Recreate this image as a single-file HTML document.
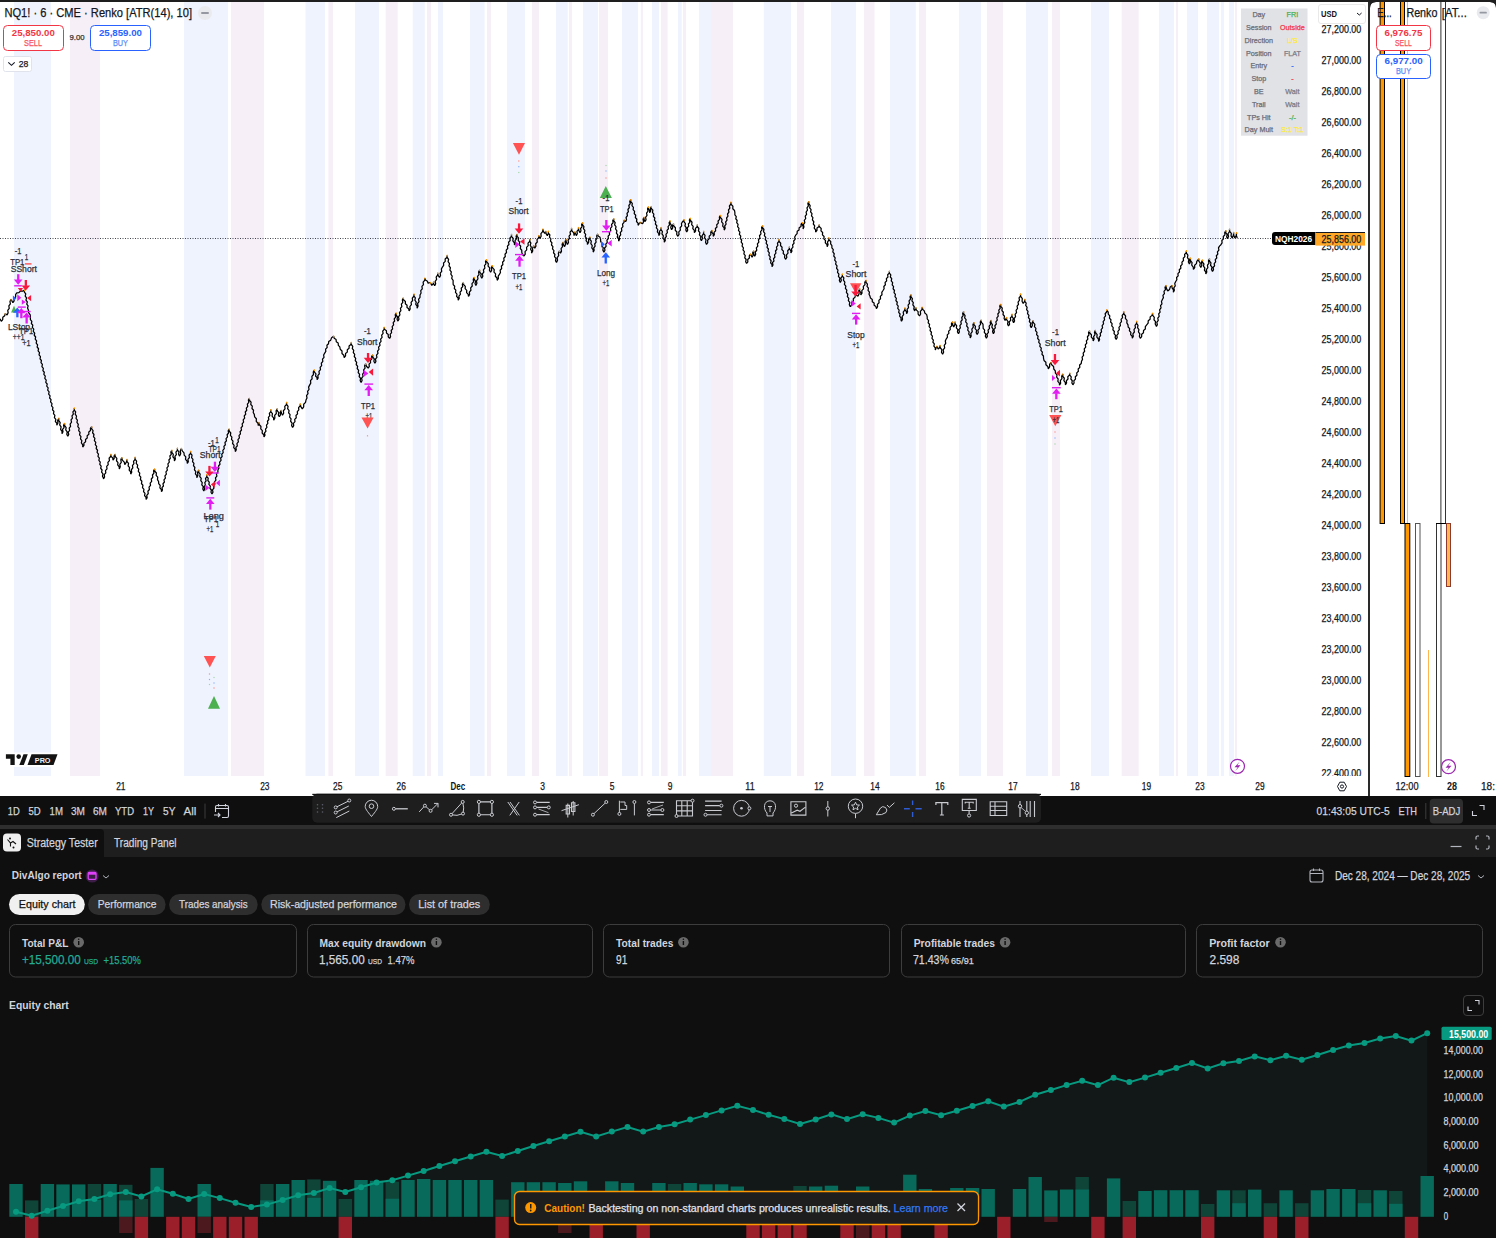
<!DOCTYPE html>
<html><head><meta charset="utf-8"><style>
html,body{margin:0;padding:0}
body{width:1496px;height:1238px;overflow:hidden;background:#0f0f0f;position:relative}
svg{position:absolute;left:0;top:0;display:block}
text{font-family:"Liberation Sans",sans-serif}
</style></head><body>

<svg width="1496" height="1238" viewBox="0 0 1496 1238">
<rect x="0" y="0" width="1496" height="796" fill="#1e1e1e"/>
<rect x="0" y="2" width="1368" height="794" fill="#ffffff"/>
<path d="M1370 796 V8 Q1370 2 1376 2 H1490 Q1496 2 1496 8 V796 Z" fill="#ffffff"/>
<rect x="14" y="2" width="37.0" height="774" fill="#eff3fe"/>
<rect x="70" y="2" width="30.0" height="774" fill="#f6eff8"/>
<rect x="184" y="2" width="44.0" height="774" fill="#eff3fe"/>
<rect x="231" y="2" width="33.0" height="774" fill="#f6eff8"/>
<rect x="305.5" y="2" width="19.5" height="774" fill="#eff3fe"/>
<rect x="328.4" y="2" width="4.6" height="774" fill="#f6eff8"/>
<rect x="355" y="2" width="24.0" height="774" fill="#eff3fe"/>
<rect x="385.7" y="2" width="12.0" height="774" fill="#f6eff8"/>
<rect x="412.7" y="2" width="12.1" height="774" fill="#eff3fe"/>
<rect x="427" y="2" width="4.0" height="774" fill="#f6eff8"/>
<rect x="438" y="2" width="5.0" height="774" fill="#eff3fe"/>
<rect x="470" y="2" width="14.6" height="774" fill="#eff3fe"/>
<rect x="487" y="2" width="4.0" height="774" fill="#f6eff8"/>
<rect x="507" y="2" width="18.0" height="774" fill="#eff3fe"/>
<rect x="532" y="2" width="7.0" height="774" fill="#f6eff8"/>
<rect x="556" y="2" width="11.7" height="774" fill="#eff3fe"/>
<rect x="569" y="2" width="3.0" height="774" fill="#f6eff8"/>
<rect x="583" y="2" width="15.0" height="774" fill="#eff3fe"/>
<rect x="599" y="2" width="9.0" height="774" fill="#f6eff8"/>
<rect x="622" y="2" width="16.0" height="774" fill="#eff3fe"/>
<rect x="640.8" y="2" width="2.2" height="774" fill="#f6eff8"/>
<rect x="652" y="2" width="7.0" height="774" fill="#eff3fe"/>
<rect x="661" y="2" width="6.6" height="774" fill="#f6eff8"/>
<rect x="678" y="2" width="3.7" height="774" fill="#eff3fe"/>
<rect x="683" y="2" width="3.0" height="774" fill="#f6eff8"/>
<rect x="699" y="2" width="12.0" height="774" fill="#eff3fe"/>
<rect x="711" y="2" width="22.0" height="774" fill="#f6eff8"/>
<rect x="763.8" y="2" width="27.2" height="774" fill="#eff3fe"/>
<rect x="797" y="2" width="7.0" height="774" fill="#f6eff8"/>
<rect x="831" y="2" width="25.0" height="774" fill="#eff3fe"/>
<rect x="864" y="2" width="10.5" height="774" fill="#f6eff8"/>
<rect x="890" y="2" width="25.8" height="774" fill="#eff3fe"/>
<rect x="919" y="2" width="7.0" height="774" fill="#f6eff8"/>
<rect x="959" y="2" width="22.0" height="774" fill="#eff3fe"/>
<rect x="987" y="2" width="16.0" height="774" fill="#f6eff8"/>
<rect x="1026" y="2" width="22.0" height="774" fill="#eff3fe"/>
<rect x="1052" y="2" width="8.0" height="774" fill="#f6eff8"/>
<rect x="1091" y="2" width="18.0" height="774" fill="#eff3fe"/>
<rect x="1121.7" y="2" width="17.0" height="774" fill="#f6eff8"/>
<rect x="1159" y="2" width="15.0" height="774" fill="#eff3fe"/>
<rect x="1176" y="2" width="2.0" height="774" fill="#f6eff8"/>
<rect x="1187" y="2" width="11.0" height="774" fill="#eff3fe"/>
<rect x="1197" y="2" width="1.0" height="774" fill="#f6eff8"/>
<rect x="1207" y="2" width="12.0" height="774" fill="#eff3fe"/>
<rect x="1221" y="2" width="3.0" height="774" fill="#eff3fe"/>
<rect x="1229" y="2" width="5.0" height="774" fill="#eff3fe"/>
<rect x="1235" y="2" width="2.0" height="774" fill="#f6eff8"/>
<polyline points="0.00,318.80 1.30,321.30 2.72,319.60 2.80,317.22 4.67,315.75 5.20,313.60 7.10,314.90 8.14,312.81 7.73,310.35 9.26,308.38 8.84,305.92 10.37,303.95 9.96,301.49 11.00,299.40 12.90,302.60 14.14,300.85 14.00,298.53 15.70,296.97 15.56,294.65 16.80,292.90 18.90,292.64 20.47,290.98 22.75,291.19 24.50,290.00 24.40,292.10 25.77,293.90 25.18,296.10 26.55,297.90 25.96,300.10 27.33,301.90 26.74,304.10 28.11,305.90 27.52,308.10 28.40,310.00 28.58,312.63 30.22,314.87 30.40,317.50 30.39,319.58 31.85,321.30 31.35,323.50 32.81,325.22 32.31,327.42 33.77,329.14 33.27,331.34 34.73,333.06 34.23,335.26 35.69,336.98 35.19,339.18 36.65,340.90 36.15,343.10 37.61,344.82 37.11,347.02 38.57,348.74 38.07,350.94 39.53,352.66 39.03,354.86 40.49,356.58 39.99,358.78 41.45,360.50 40.95,362.70 42.41,364.42 41.91,366.62 43.37,368.34 42.87,370.54 44.33,372.26 43.83,374.46 45.29,376.18 44.79,378.38 46.25,380.10 45.75,382.30 47.21,384.02 46.71,386.22 48.17,387.94 47.67,390.14 49.13,391.86 48.63,394.06 50.09,395.78 49.59,397.98 51.05,399.70 50.55,401.90 52.01,403.62 51.51,405.82 52.97,407.54 52.47,409.74 53.93,411.46 53.43,413.66 54.89,415.38 54.39,417.58 55.85,419.30 55.35,421.50 56.81,423.22 56.80,425.30 57.95,423.07 57.65,420.43 58.80,418.20 58.77,420.52 60.20,422.53 59.68,424.94 61.12,426.96 60.60,429.37 62.03,431.38 62.00,433.70 63.00,431.76 62.56,429.46 64.04,427.64 63.60,425.34 64.60,423.40 64.65,425.67 66.15,427.58 65.71,429.97 67.22,431.88 66.78,434.27 67.80,436.30 68.75,434.38 68.24,432.13 69.68,430.33 69.17,428.07 70.61,426.27 70.10,424.02 71.54,422.21 71.03,419.96 72.47,418.15 71.96,415.90 73.39,414.10 72.88,411.85 74.32,410.04 74.30,407.90 74.25,410.06 75.67,411.91 75.14,414.18 76.56,416.03 76.02,418.29 77.44,420.14 76.91,422.41 78.33,424.26 77.79,426.53 79.21,428.37 78.67,430.64 80.09,432.49 79.56,434.76 80.98,436.61 80.44,438.87 81.86,440.72 81.33,442.99 82.75,444.84 82.70,447.00 83.98,445.36 83.88,443.11 85.61,441.67 85.52,439.42 87.25,437.98 87.15,435.72 88.88,434.28 88.79,432.03 90.52,430.59 90.42,428.34 91.70,426.70 91.66,428.78 93.09,430.53 92.56,432.73 93.99,434.48 93.46,436.68 94.89,438.43 94.36,440.62 95.79,442.37 95.26,444.57 96.69,446.32 96.16,448.52 97.59,450.27 97.06,452.46 98.49,454.21 97.96,456.41 99.39,458.16 98.86,460.35 100.29,462.10 99.76,464.30 101.19,466.05 100.66,468.25 102.09,470.00 101.56,472.19 102.99,473.94 102.46,476.14 103.40,478.00 103.50,478.90 104.59,476.99 104.24,474.66 105.80,472.89 105.45,470.56 107.02,468.79 106.67,466.46 108.24,464.69 107.89,462.36 109.45,460.59 109.10,458.26 110.67,456.49 110.80,454.30 111.07,456.41 112.73,457.99 113.00,460.10 114.20,458.34 114.00,456.06 115.20,454.30 115.30,456.53 116.85,458.37 116.48,460.73 118.02,462.57 117.65,464.93 119.20,466.77 119.30,469.00 120.29,466.83 119.81,464.33 121.29,462.27 120.81,459.77 121.80,457.60 122.34,460.13 124.26,462.07 124.80,464.60 126.36,462.19 127.00,459.40 127.04,461.62 128.54,463.48 128.10,465.82 129.60,467.68 129.16,470.02 130.66,471.88 130.70,474.10 131.73,472.11 131.32,469.75 132.83,467.89 132.42,465.52 133.93,463.66 133.52,461.30 135.03,459.44 135.10,457.20 135.14,459.34 136.63,461.10 136.19,463.37 137.68,465.13 137.24,467.40 138.73,469.16 138.28,471.43 139.77,473.19 139.33,475.45 140.82,477.22 140.38,479.48 141.87,481.25 141.43,483.51 142.92,485.27 142.47,487.54 143.96,489.30 143.52,491.57 145.01,493.33 144.57,495.60 146.06,497.36 146.10,499.50 147.15,497.60 146.75,495.30 148.28,493.53 147.89,491.23 149.41,489.47 149.02,487.17 150.55,485.40 150.15,483.10 151.68,481.33 151.29,479.03 152.81,477.27 152.42,474.97 153.95,473.20 153.55,470.90 154.60,469.00 154.79,471.24 156.41,473.01 156.12,475.40 157.74,477.18 157.46,479.57 158.60,481.50 158.70,483.70 160.24,485.48 159.86,487.82 161.40,489.60 161.50,491.80 162.48,489.94 162.00,487.72 163.46,485.98 162.98,483.76 164.44,482.02 163.96,479.79 165.42,478.05 164.94,475.83 166.40,474.09 165.92,471.87 167.38,470.13 166.90,467.91 168.36,466.17 167.88,463.95 169.34,462.21 168.86,459.98 170.32,458.24 169.84,456.02 171.30,454.28 170.82,452.06 171.80,450.20 171.83,452.46 173.33,454.36 172.87,456.74 174.37,458.64 174.40,460.90 175.39,458.86 174.91,456.49 176.39,454.56 175.91,452.19 177.39,450.26 177.40,448.00 177.47,450.16 178.98,451.92 178.57,454.21 179.60,456.10 180.69,453.65 180.31,450.85 181.40,448.40 182.27,450.85 184.00,452.80 184.18,455.09 185.80,456.93 185.50,459.37 187.12,461.21 187.30,463.50 188.33,461.60 187.92,459.30 189.43,457.53 189.02,455.24 190.53,453.46 190.60,451.30 190.59,453.45 192.04,455.26 191.54,457.53 192.99,459.34 192.50,461.61 193.95,463.42 193.45,465.68 194.90,467.49 194.41,469.76 195.86,471.57 195.36,473.84 196.81,475.65 196.80,477.80 197.92,475.35 197.58,472.55 198.70,470.10 198.72,472.31 200.21,474.16 199.74,476.49 201.23,478.34 200.76,480.67 202.25,482.52 201.78,484.85 203.27,486.70 202.80,489.03 203.80,491.00 204.65,489.02 204.03,486.79 205.38,484.90 204.76,482.66 206.10,480.77 205.48,478.54 206.83,476.65 206.70,474.50 206.75,476.58 208.24,478.27 207.81,480.48 209.30,482.17 208.87,484.38 210.36,486.07 209.93,488.28 211.42,489.97 210.99,492.18 212.00,494.00 212.98,492.12 212.50,489.88 213.96,488.12 213.48,485.88 214.94,484.12 214.46,481.88 215.93,480.12 215.45,477.88 216.91,476.12 216.43,473.88 217.89,472.12 217.90,470.00 218.92,468.18 218.49,465.96 220.00,464.28 219.57,462.06 221.07,460.37 220.65,458.15 222.15,456.47 221.72,454.25 223.22,452.56 222.80,450.34 224.30,448.66 223.88,446.44 225.38,444.75 224.95,442.53 226.45,440.85 226.03,438.63 227.53,436.94 227.10,434.72 228.61,433.04 228.18,430.82 229.20,429.00 229.27,431.18 230.79,432.98 230.38,435.29 231.90,437.09 231.49,439.40 233.01,441.20 232.60,443.51 234.12,445.31 233.71,447.62 235.23,449.42 235.30,451.60 236.31,449.75 235.86,447.52 237.35,445.81 236.91,443.58 238.39,441.86 237.95,439.63 239.44,437.91 238.99,435.68 240.48,433.96 240.04,431.73 241.53,430.01 241.08,427.78 242.57,426.06 242.13,423.84 243.62,422.12 243.17,419.89 244.66,418.17 244.22,415.94 245.71,414.22 245.26,411.99 246.75,410.27 246.31,408.04 247.79,406.32 247.35,404.09 248.84,402.38 248.39,400.15 249.40,398.30 249.53,400.46 251.10,402.18 250.76,404.48 252.33,406.20 251.98,408.51 253.55,410.23 253.21,412.53 254.30,414.40 254.63,416.83 256.37,418.75 256.23,421.35 257.97,423.27 258.30,425.70 259.10,422.50 259.33,424.73 260.97,426.48 260.73,428.87 262.37,430.63 262.13,433.02 263.77,434.77 264.00,437.00 264.97,435.16 264.49,432.97 265.94,431.25 265.46,429.05 266.91,427.33 266.43,425.14 267.89,423.42 267.40,421.22 268.86,419.51 268.37,417.31 269.83,415.59 269.34,413.39 270.80,411.68 270.80,409.60 270.90,411.83 272.44,413.67 272.06,416.03 273.60,417.87 273.70,420.10 274.90,417.99 274.66,415.43 276.34,413.47 276.10,410.91 277.30,408.80 277.31,410.92 278.79,412.68 278.31,414.92 279.30,416.80 280.44,414.82 280.16,412.38 281.30,410.40 281.41,412.92 282.50,415.20 283.66,413.20 283.39,410.75 285.03,408.90 284.76,406.45 286.39,404.60 286.60,402.30 286.61,404.51 288.09,406.37 287.61,408.69 289.09,410.55 288.61,412.87 290.09,414.73 289.61,417.06 291.09,418.92 290.61,421.24 292.09,423.10 291.61,425.42 292.60,427.40 293.72,425.60 293.41,423.33 295.00,421.68 294.69,419.41 296.28,417.76 295.97,415.49 297.57,413.85 297.26,411.58 298.85,409.93 298.54,407.66 300.13,406.01 300.30,403.90 300.84,406.54 302.30,408.80 303.69,406.79 303.69,404.21 305.54,402.39 306.00,400.00 307.00,397.99 306.54,395.63 308.03,393.73 307.57,391.37 309.06,389.47 308.60,387.11 309.60,385.10 310.76,383.09 310.49,380.63 312.13,378.78 311.87,376.32 313.51,374.47 313.24,372.01 314.40,370.00 314.46,372.09 315.96,373.79 315.54,376.01 317.04,377.71 317.10,379.80 318.17,377.88 317.79,375.56 319.33,373.78 318.96,371.45 320.50,369.67 320.13,367.34 321.67,365.56 321.30,363.23 322.84,361.45 322.47,359.12 324.01,357.34 323.63,355.02 324.70,353.10 325.84,351.35 325.56,349.10 327.17,347.51 326.89,345.27 328.51,343.68 328.70,341.60 330.70,340.14 331.60,337.66 333.60,336.20 334.20,338.23 336.10,339.52 336.27,341.80 338.17,343.08 338.33,345.37 339.80,346.90 340.22,349.23 342.02,350.99 341.98,353.51 343.78,355.27 344.20,357.60 345.54,355.91 345.52,353.59 347.32,352.11 347.30,349.79 349.09,348.31 349.07,345.99 350.87,344.51 351.30,342.40 351.30,344.52 352.77,346.28 352.28,348.52 353.75,350.28 353.26,352.52 354.73,354.28 354.24,356.52 355.71,358.28 355.22,360.52 356.69,362.28 356.20,364.52 357.67,366.28 357.18,368.52 358.65,370.28 358.16,372.52 359.63,374.28 359.14,376.52 360.61,378.28 360.12,380.52 361.10,382.40 362.09,380.45 361.61,378.15 363.09,376.32 362.61,374.02 364.09,372.18 363.61,369.88 365.09,368.05 364.61,365.75 365.60,363.80 366.47,366.25 368.20,368.20 369.32,366.46 369.01,364.24 370.60,362.66 370.30,360.44 371.89,358.86 371.58,356.64 372.70,354.90 372.77,357.13 374.28,358.97 373.87,361.33 374.90,363.30 375.90,361.43 375.45,359.17 376.93,357.43 376.48,355.17 377.97,353.43 377.52,351.17 379.00,349.43 378.55,347.17 380.03,345.43 379.58,343.17 381.07,341.43 380.62,339.17 382.10,337.43 381.65,335.17 383.13,333.43 382.68,331.17 384.17,329.43 384.20,327.30 384.65,329.37 386.45,330.78 386.45,333.07 388.25,334.48 388.25,336.77 389.60,338.40 390.59,336.58 390.13,334.38 391.61,332.69 391.15,330.49 392.62,328.80 392.16,326.60 393.64,324.90 393.18,322.70 394.65,321.01 394.19,318.81 395.67,317.12 395.21,314.92 396.20,313.10 396.16,315.21 397.59,316.99 397.06,319.21 398.00,321.10 398.97,319.11 398.48,316.79 399.93,314.91 399.44,312.59 400.90,310.71 400.40,308.39 401.86,306.51 401.37,304.19 402.82,302.31 402.33,299.99 403.30,298.00 403.67,300.05 405.41,301.48 405.33,303.73 407.07,305.17 406.99,307.42 408.73,308.85 409.10,310.90 410.19,308.93 409.84,306.54 411.42,304.70 411.07,302.31 412.64,300.48 412.29,298.09 413.87,296.25 414.00,294.00 413.95,296.14 415.37,297.95 414.84,300.19 416.26,302.01 415.73,304.25 417.15,306.06 417.10,308.20 418.07,306.11 417.58,303.69 419.04,301.71 418.54,299.29 420.01,297.31 420.00,295.00 421.08,293.02 420.72,290.64 422.28,288.80 421.92,286.41 423.48,284.57 423.12,282.19 424.68,280.35 424.80,278.10 425.48,280.07 427.42,281.23 428.10,283.20 430.30,282.50 431.80,285.40 433.15,283.82 433.60,281.80 433.67,283.93 434.70,285.80 435.67,283.76 435.18,281.39 436.64,279.46 436.15,277.09 437.60,275.16 437.60,272.90 438.09,275.34 439.50,277.40 440.56,275.48 440.18,273.14 441.72,271.36 441.34,269.02 442.40,267.10 443.66,265.32 443.54,262.98 445.26,261.39 445.14,259.04 446.86,257.46 447.20,255.30 447.17,257.50 448.60,259.38 448.07,261.68 449.50,263.56 448.98,265.87 450.41,267.75 449.89,270.05 451.32,271.93 450.80,274.24 452.23,276.12 451.70,278.42 453.13,280.30 453.10,282.50 453.19,284.59 454.71,286.27 454.32,288.51 455.85,290.18 455.45,292.42 456.98,294.09 456.59,296.33 458.11,298.01 458.20,300.10 459.26,298.29 458.88,296.05 460.41,294.38 460.03,292.14 461.57,290.46 461.19,288.22 462.72,286.55 462.34,284.31 463.40,282.50 463.66,284.67 465.33,286.33 465.12,288.67 466.78,290.33 466.57,292.67 468.24,294.33 468.50,296.50 469.63,294.53 469.33,292.11 470.94,290.28 470.64,287.86 472.26,286.04 471.96,283.62 473.57,281.79 473.27,279.37 474.40,277.40 474.28,279.49 475.64,281.31 475.03,283.49 475.90,285.40 476.91,283.32 476.47,280.88 477.97,278.92 477.53,276.48 479.03,274.52 478.59,272.08 479.60,270.00 479.67,272.16 481.18,273.92 480.77,276.21 481.80,278.10 482.81,276.18 482.36,273.89 483.85,272.09 483.40,269.80 484.90,268.00 484.45,265.71 485.94,263.91 485.49,261.62 486.50,259.70 486.71,261.94 488.34,263.71 488.07,266.11 489.71,267.88 489.44,270.27 490.60,272.20 491.68,270.13 491.32,267.67 492.40,265.60 492.61,267.86 494.25,269.64 493.98,272.06 495.62,273.84 495.35,276.26 496.99,278.04 497.20,280.30 498.40,278.51 498.20,276.19 499.40,274.40 500.48,272.54 500.13,270.25 501.69,268.53 501.34,266.24 502.90,264.52 502.55,262.23 504.11,260.51 503.76,258.22 505.32,256.50 504.97,254.21 506.53,252.49 506.18,250.20 507.74,248.48 507.39,246.19 508.95,244.47 508.60,242.18 510.16,240.46 509.81,238.17 511.37,236.45 511.50,234.30 511.62,236.57 513.18,238.45 512.82,240.85 514.38,242.73 514.50,245.00 515.51,242.98 515.05,240.60 516.55,238.70 516.09,236.32 517.10,234.30 517.14,236.44 518.63,238.20 518.18,240.46 519.67,242.22 519.23,244.48 520.72,246.24 520.27,248.50 521.76,250.26 521.80,252.40 522.47,254.46 524.00,256.00 525.22,254.05 525.03,251.61 526.72,249.83 526.53,247.38 528.22,245.60 528.03,243.16 529.72,241.38 530.00,239.10 529.72,241.17 530.93,243.08 530.15,245.20 531.35,247.10 530.57,249.22 531.78,251.13 531.50,253.20 532.71,250.91 532.49,248.19 533.70,245.90 534.80,248.10 535.94,246.17 535.66,243.78 537.28,242.00 536.99,239.61 538.61,237.84 538.80,235.60 539.90,238.50 541.13,236.28 540.92,233.60 542.63,231.53 542.90,229.00 543.34,231.39 544.70,233.40 545.80,231.20 546.08,233.56 547.30,235.60 548.34,233.52 548.40,231.20 548.42,233.28 549.90,234.97 549.43,237.18 550.91,238.87 550.45,241.08 551.92,242.77 551.46,244.98 552.93,246.67 552.47,248.88 553.95,250.57 553.48,252.78 554.96,254.47 554.50,256.68 555.97,258.37 555.51,260.58 556.50,262.40 557.56,260.24 557.18,257.72 558.72,255.68 558.34,253.16 559.40,251.00 560.50,253.20 561.51,251.12 561.05,248.68 562.55,246.72 562.09,244.28 563.10,242.20 563.38,244.56 564.60,246.60 565.56,244.26 565.04,241.64 566.00,239.30 566.27,241.99 567.50,244.40 568.49,242.49 568.01,240.23 569.49,238.44 569.01,236.18 570.49,234.39 570.01,232.13 571.49,230.34 571.50,228.20 571.89,230.83 573.71,232.97 574.10,235.60 574.90,231.90 576.30,235.60 577.33,233.71 576.92,231.42 578.43,229.66 578.50,227.50 578.77,230.19 580.00,232.60 581.00,230.75 580.56,228.51 582.04,226.79 581.60,224.55 582.60,222.70 582.55,224.78 583.96,226.54 583.42,228.73 584.83,230.48 584.29,232.67 585.71,234.43 585.17,236.62 586.58,238.37 586.04,240.56 587.45,242.32 587.40,244.40 588.71,242.09 588.59,239.31 589.90,237.00 589.88,239.26 591.33,241.21 590.83,243.58 592.27,245.52 591.77,247.89 593.22,249.84 593.20,252.10 594.17,250.22 593.69,247.98 595.15,246.22 594.67,243.98 596.13,242.22 595.65,239.98 597.11,238.22 596.63,235.98 597.60,234.10 598.17,236.08 600.03,237.32 600.60,239.30 600.67,241.56 602.18,243.44 601.77,245.82 603.28,247.71 602.87,250.09 603.90,252.10 604.96,250.28 604.59,248.03 606.13,246.35 605.75,244.10 607.29,242.42 606.91,240.17 608.46,238.49 608.08,236.24 609.62,234.56 609.24,232.31 610.79,230.63 610.41,228.38 611.95,226.70 611.57,224.45 613.11,222.77 612.74,220.52 613.80,218.70 613.75,220.84 615.16,222.67 614.62,224.91 616.03,226.74 615.49,228.99 616.91,230.81 616.37,233.06 617.78,234.89 617.24,237.13 618.65,238.96 618.60,241.10 619.63,239.13 619.22,236.77 620.73,234.93 620.32,232.57 621.83,230.73 621.42,228.37 622.93,226.53 622.52,224.17 624.03,222.33 624.10,220.10 625.60,221.60 626.55,219.71 626.04,217.49 627.48,215.71 626.97,213.49 628.41,211.71 627.89,209.49 629.33,207.71 628.82,205.49 630.26,203.71 629.75,201.49 630.70,199.60 630.79,201.72 632.32,203.42 631.93,205.67 633.46,207.37 633.07,209.62 634.60,211.32 634.20,213.58 635.73,215.28 635.34,217.53 636.87,219.23 636.48,221.48 638.01,223.18 638.10,225.30 640.00,222.40 642.60,223.80 643.56,221.70 643.04,219.30 644.00,217.20 644.06,219.52 645.10,221.60 646.07,219.61 645.58,217.29 647.04,215.41 646.56,213.09 648.02,211.21 647.53,208.89 648.50,206.90 648.38,208.96 649.72,210.74 649.60,212.80 650.68,210.84 650.32,208.46 651.40,206.50 651.41,208.56 652.87,210.26 652.40,212.44 653.86,214.14 653.38,216.32 654.84,218.02 654.37,220.20 655.83,221.90 655.36,224.08 656.82,225.78 656.34,227.96 657.80,229.66 657.33,231.84 658.79,233.54 658.80,235.60 659.83,233.71 659.42,231.42 660.93,229.66 661.00,227.50 660.98,229.71 662.43,231.59 661.93,233.91 663.37,235.79 662.87,238.11 664.32,239.99 664.30,242.20 665.31,240.40 664.87,238.20 666.36,236.52 665.93,234.32 667.42,232.65 666.98,230.45 668.47,228.78 668.04,226.58 669.53,224.90 669.09,222.70 670.10,220.90 669.98,223.18 671.34,225.22 670.73,227.58 671.60,229.70 672.71,227.89 672.39,225.61 673.50,223.80 673.76,226.05 675.44,227.80 675.23,230.22 676.90,231.97 676.70,234.38 677.90,236.30 679.05,234.35 678.77,231.95 680.39,230.15 680.11,227.75 681.73,225.95 681.45,223.55 682.60,221.60 684.10,219.80 684.04,221.92 685.46,223.73 684.91,225.96 686.32,227.76 685.78,229.99 686.70,231.90 687.71,230.09 687.27,227.88 688.77,226.20 688.33,224.00 689.83,222.32 689.39,220.11 690.40,218.30 690.49,220.48 692.02,222.25 691.63,224.56 693.17,226.34 692.78,228.65 694.31,230.42 694.40,232.60 695.62,230.78 695.43,228.42 697.12,226.78 697.40,224.60 697.41,226.73 698.89,228.50 698.41,230.76 699.89,232.53 699.41,234.78 700.89,236.55 700.41,238.81 701.40,240.70 702.44,238.44 702.01,235.84 703.54,233.69 703.60,231.20 703.59,233.51 705.06,235.49 704.56,237.91 706.02,239.89 705.53,242.31 706.50,244.40 707.75,242.58 707.61,240.22 709.32,238.58 709.18,236.22 710.89,234.58 710.75,232.22 712.00,230.40 711.91,232.47 713.29,234.23 713.20,236.30 714.34,234.56 714.06,232.34 715.66,230.76 715.38,228.54 716.99,226.96 716.71,224.74 718.32,223.16 718.04,220.94 719.64,219.36 719.36,217.14 720.50,215.40 720.54,217.62 722.04,219.48 721.60,221.82 723.10,223.68 722.66,226.02 724.16,227.88 724.20,230.10 725.16,228.21 724.66,225.99 726.10,224.21 725.60,221.99 727.04,220.21 726.54,217.99 727.99,216.21 727.48,213.99 728.93,212.21 728.43,209.99 729.87,208.21 729.37,205.99 730.82,204.21 730.80,202.10 731.15,204.42 732.91,206.20 732.79,208.70 734.55,210.48 734.90,212.80 734.86,214.86 736.29,216.59 735.76,218.76 737.19,220.49 736.66,222.66 738.09,224.39 737.56,226.56 738.99,228.29 738.46,230.46 739.89,232.19 739.36,234.36 740.79,236.09 740.26,238.26 741.69,239.99 741.16,242.16 742.59,243.89 742.06,246.06 743.49,247.79 742.96,249.96 744.39,251.69 743.86,253.86 745.29,255.59 744.76,257.76 746.19,259.49 745.66,261.66 746.60,263.50 747.84,261.81 747.70,259.55 749.40,258.05 749.26,255.79 750.50,254.10 752.10,257.20 753.12,255.22 752.68,252.88 753.70,250.90 753.71,253.64 754.70,256.20 755.71,254.29 755.27,252.01 756.76,250.23 756.32,247.94 757.82,246.16 757.38,243.87 758.87,242.09 758.43,239.81 759.92,238.03 759.48,235.74 760.98,233.96 760.54,231.67 762.03,229.89 761.59,227.61 762.60,225.70 762.56,227.76 763.98,229.49 763.46,231.67 764.88,233.40 764.35,235.57 765.77,237.30 765.25,239.48 766.67,241.21 766.14,243.38 767.56,245.11 767.04,247.29 768.46,249.02 767.93,251.19 769.35,252.92 768.83,255.10 770.25,256.83 769.72,259.00 771.14,260.73 770.62,262.91 772.04,264.64 772.00,266.70 772.98,264.87 772.50,262.68 773.96,260.97 773.49,258.78 774.95,257.07 774.47,254.88 775.93,253.17 775.46,250.98 776.92,249.27 776.44,247.08 777.91,245.37 777.43,243.18 778.89,241.47 778.90,239.40 779.11,241.55 780.73,243.22 780.47,245.53 782.09,247.20 781.83,249.51 783.45,251.18 783.19,253.49 784.81,255.16 784.55,257.47 785.70,259.30 786.80,257.34 786.45,254.96 788.03,253.14 787.69,250.76 789.26,248.94 789.40,246.70 789.41,248.92 790.89,250.78 790.90,253.00 791.92,251.15 791.48,248.91 792.98,247.20 792.55,244.96 794.05,243.24 793.62,241.00 795.12,239.29 794.68,237.05 795.70,235.20 797.11,233.64 797.20,231.36 799.05,230.04 799.15,227.76 801.00,226.44 801.09,224.16 802.50,222.60 802.17,224.74 803.33,226.76 803.00,228.90 803.94,226.90 803.40,224.60 804.83,222.70 804.30,220.40 805.72,218.50 805.19,216.20 806.61,214.30 806.08,212.00 807.50,210.10 806.97,207.80 808.40,205.90 807.86,203.60 808.80,201.60 808.77,203.74 810.19,205.54 809.67,207.79 811.10,209.60 810.58,211.84 812.01,213.65 811.49,215.90 812.91,217.70 812.39,219.95 813.82,221.76 813.30,224.00 814.73,225.81 814.21,228.06 815.63,229.86 815.60,232.00 816.97,230.40 817.00,228.12 818.82,226.75 819.30,224.70 819.55,226.87 821.21,228.53 820.98,230.87 822.64,232.53 822.42,234.87 824.08,236.53 823.86,238.87 825.52,240.53 825.29,242.87 826.95,244.53 827.20,246.70 828.07,244.56 827.46,242.17 828.82,240.11 828.70,237.80 829.04,239.96 830.76,241.56 830.64,243.91 831.90,245.70 831.88,247.85 833.32,249.67 832.81,251.93 834.25,253.74 833.75,256.01 835.19,257.82 834.68,260.08 836.12,261.90 835.61,264.16 837.05,265.98 836.55,268.24 837.99,270.06 837.48,272.32 838.92,274.13 838.41,276.39 839.85,278.21 839.35,280.47 840.30,282.40 841.31,280.42 840.86,278.08 842.36,276.22 842.40,274.00 842.41,276.16 843.87,277.96 843.40,280.23 844.86,282.03 844.38,284.31 845.85,286.11 845.37,288.38 846.84,290.18 846.36,292.46 847.82,294.26 847.35,296.53 848.81,298.33 848.33,300.61 849.80,302.41 849.32,304.68 850.30,306.60 851.62,304.87 851.58,302.53 853.36,301.00 853.31,298.66 855.09,297.14 855.50,295.00 858.10,296.10 859.12,293.74 858.68,291.06 859.70,288.70 859.57,290.89 860.93,292.81 860.80,295.00 862.01,293.07 861.81,290.63 863.50,288.87 863.30,286.43 864.99,284.67 864.79,282.23 866.00,280.30 866.02,282.40 867.48,284.13 867.02,286.35 868.48,288.08 868.02,290.30 869.48,292.03 869.02,294.25 870.00,296.10 870.47,298.11 872.27,299.44 872.30,301.69 874.10,303.01 874.13,305.26 875.93,306.59 876.40,308.60 877.60,306.76 877.40,304.41 879.07,302.74 878.86,300.38 880.54,298.72 880.33,296.36 882.00,294.69 881.80,292.34 883.00,290.50 884.12,288.71 883.80,286.44 885.40,284.81 885.08,282.54 886.68,280.91 886.36,278.64 887.96,277.01 887.64,274.74 889.24,273.11 889.40,271.00 889.38,273.08 890.81,274.80 890.31,277.00 891.74,278.72 891.23,280.92 892.67,282.64 892.16,284.84 893.60,286.56 893.09,288.76 894.53,290.48 894.02,292.68 895.45,294.40 894.95,296.60 896.38,298.32 895.87,300.52 897.31,302.24 896.80,304.44 898.24,306.16 897.73,308.36 899.17,310.08 898.66,312.28 900.09,314.00 899.59,316.20 901.02,317.92 901.00,320.00 901.50,321.20 902.54,319.10 902.11,316.65 903.64,314.67 903.21,312.21 904.74,310.24 904.80,307.90 904.92,310.01 906.48,311.69 906.60,313.80 907.58,311.79 907.09,309.44 908.55,307.55 908.07,305.20 909.53,303.30 909.05,300.95 910.51,299.06 910.02,296.71 911.00,294.70 910.98,296.84 912.41,298.64 911.90,300.89 913.34,302.69 912.83,304.94 914.26,306.74 913.75,308.99 914.70,310.90 915.80,307.60 916.27,309.90 918.11,311.60 918.12,314.10 919.50,316.00 920.63,313.94 920.32,311.46 921.93,309.54 922.10,307.20 922.77,309.31 924.30,310.90 924.82,313.09 926.68,314.61 927.20,316.80 927.19,318.87 928.64,320.58 928.14,322.76 929.59,324.47 929.10,326.65 930.54,328.36 930.05,330.55 931.50,332.26 931.00,334.44 932.45,336.15 931.96,338.34 933.40,340.05 932.91,342.23 934.36,343.94 933.86,346.12 935.31,347.83 935.30,349.90 936.80,346.20 938.20,349.10 939.59,347.48 940.10,345.40 940.24,347.76 941.83,349.71 941.49,352.21 942.60,354.30 943.61,352.20 943.17,349.76 944.67,347.77 944.23,345.33 945.73,343.34 945.29,340.90 946.30,338.80 947.47,337.10 947.23,334.87 948.87,333.34 948.63,331.11 950.27,329.59 950.03,327.36 951.67,325.83 951.43,323.60 952.60,321.90 952.66,324.60 953.70,327.10 954.88,324.63 955.10,321.90 955.19,324.01 956.71,325.69 956.32,327.94 957.85,329.63 957.45,331.87 958.50,333.70 959.45,331.80 958.94,329.57 960.38,327.79 959.87,325.55 961.31,323.77 960.79,321.53 962.23,319.75 961.72,317.51 963.16,315.73 962.65,313.50 963.60,311.60 963.62,313.76 965.10,315.56 964.64,317.84 966.12,319.63 965.65,321.91 967.13,323.71 966.67,325.99 968.15,327.79 967.68,330.07 969.16,331.86 968.70,334.14 970.18,335.94 970.20,338.10 971.21,336.00 970.77,333.56 972.27,331.57 971.83,329.13 973.33,327.14 972.89,324.70 973.90,322.60 973.97,324.70 975.48,326.40 975.07,328.63 976.58,330.33 976.17,332.57 977.20,334.40 978.27,332.49 977.89,330.18 979.44,328.41 979.06,326.09 980.61,324.32 980.23,322.01 981.30,320.10 981.42,322.31 982.98,324.09 983.10,326.30 983.17,328.40 984.68,330.10 984.27,332.33 985.78,334.03 985.37,336.27 986.40,338.10 987.42,336.26 986.98,334.04 988.48,332.33 988.05,330.10 989.55,328.40 989.12,326.17 990.62,324.46 990.18,322.24 991.20,320.40 991.07,322.70 992.43,324.75 991.81,327.13 993.16,329.19 992.54,331.56 993.40,333.70 994.37,331.86 993.89,329.66 995.35,327.94 994.86,325.74 996.32,324.02 995.83,321.82 997.29,320.10 996.81,317.90 998.27,316.18 997.78,313.98 999.24,312.26 998.75,310.06 1000.21,308.34 999.73,306.14 1000.70,304.30 1000.77,306.44 1002.28,308.19 1001.87,310.47 1003.38,312.22 1002.97,314.49 1004.48,316.24 1004.07,318.52 1005.10,320.40 1006.60,317.50 1006.59,319.73 1008.04,321.64 1007.54,323.98 1008.50,326.00 1009.56,324.18 1009.19,321.92 1010.73,320.24 1010.35,317.99 1011.90,316.31 1012.00,314.20 1011.91,316.44 1013.29,318.41 1012.71,320.74 1013.60,322.80 1014.58,320.85 1014.10,318.56 1015.56,316.72 1015.09,314.43 1016.55,312.59 1016.07,310.30 1017.54,308.47 1017.06,306.17 1018.52,304.34 1018.04,302.04 1019.51,300.21 1019.03,297.91 1020.49,296.08 1020.50,293.90 1020.69,296.44 1022.33,298.56 1022.04,301.24 1023.20,303.50 1024.47,301.58 1024.80,299.30 1024.77,301.43 1026.20,303.23 1025.68,305.47 1027.12,307.28 1026.60,309.52 1028.03,311.32 1027.51,313.56 1028.94,315.36 1028.43,317.60 1029.86,319.40 1029.34,321.65 1030.77,323.45 1030.26,325.69 1031.20,327.60 1032.38,325.41 1032.12,322.79 1033.30,320.60 1033.35,322.70 1034.86,324.42 1034.43,326.65 1035.93,328.36 1035.50,330.60 1037.00,332.31 1036.58,334.55 1038.08,336.26 1037.65,338.49 1039.15,340.21 1038.72,342.44 1040.22,344.15 1039.80,346.39 1041.30,348.10 1040.87,350.34 1042.37,352.05 1041.94,354.28 1043.45,356.00 1043.50,358.10 1044.00,360.44 1045.88,362.18 1045.92,364.72 1047.80,366.46 1048.30,368.80 1049.66,366.86 1049.64,364.34 1051.00,362.40 1051.63,364.75 1053.60,366.42 1053.78,369.00 1055.30,370.90 1055.42,373.10 1056.98,374.87 1056.62,377.21 1058.18,378.99 1057.82,381.33 1059.38,383.10 1059.50,385.30 1060.64,383.20 1060.34,380.68 1061.96,378.72 1061.66,376.20 1062.80,374.10 1062.83,376.36 1064.33,378.26 1063.87,380.64 1065.37,382.54 1065.40,384.80 1066.59,383.00 1066.36,380.70 1068.02,379.07 1067.80,376.76 1069.45,375.14 1069.70,373.00 1069.75,375.10 1071.25,376.80 1070.82,379.03 1072.32,380.74 1071.88,382.96 1072.90,384.80 1074.09,383.01 1073.86,380.71 1075.52,379.10 1075.30,376.79 1076.95,375.18 1076.73,372.88 1078.39,371.26 1078.16,368.96 1079.82,367.35 1079.60,365.04 1081.25,363.43 1081.50,361.30 1082.52,359.39 1082.08,357.11 1083.58,355.33 1083.15,353.04 1084.65,351.26 1084.22,348.97 1085.72,347.19 1085.28,344.91 1086.78,343.13 1086.35,340.84 1087.85,339.06 1087.42,336.77 1088.92,334.99 1088.48,332.71 1089.50,330.80 1089.77,333.01 1091.45,334.71 1091.25,337.09 1092.93,338.79 1093.20,341.00 1094.13,338.96 1093.59,336.62 1095.01,334.68 1094.47,332.34 1095.40,330.30 1095.56,332.68 1097.16,334.64 1096.84,337.16 1098.44,339.12 1098.60,341.50 1099.58,339.65 1099.12,337.43 1100.58,335.70 1100.12,333.48 1101.58,331.75 1101.12,329.53 1102.58,327.80 1102.12,325.58 1103.58,323.85 1103.12,321.63 1104.58,319.90 1104.12,317.68 1105.58,315.95 1105.12,313.73 1106.58,312.00 1106.60,309.90 1108.20,312.10 1108.29,314.19 1109.82,315.86 1109.43,318.09 1110.97,319.76 1110.58,321.99 1112.11,323.66 1111.72,325.89 1113.25,327.56 1112.86,329.79 1114.39,331.46 1114.01,333.69 1115.54,335.36 1115.15,337.59 1116.20,339.40 1117.22,337.54 1116.79,335.30 1118.29,333.57 1117.86,331.33 1119.36,329.60 1118.93,327.36 1120.43,325.63 1120.00,323.38 1121.50,321.66 1121.07,319.41 1122.58,317.69 1122.15,315.44 1123.65,313.72 1123.70,311.60 1123.94,313.97 1125.61,315.88 1125.37,318.40 1127.04,320.31 1126.81,322.84 1128.00,324.90 1128.14,326.97 1129.70,328.58 1129.37,330.80 1130.93,332.40 1130.60,334.62 1132.16,336.23 1132.30,338.30 1133.32,336.28 1132.89,333.90 1134.40,332.01 1133.97,329.63 1135.47,327.73 1135.04,325.35 1136.55,323.46 1136.60,321.20 1136.57,323.44 1138.01,325.37 1137.50,327.72 1138.94,329.64 1138.42,331.99 1139.86,333.92 1139.35,336.27 1140.30,338.30 1141.67,336.60 1141.68,334.26 1143.49,332.77 1143.51,330.43 1145.32,328.94 1145.33,326.60 1146.70,324.90 1148.13,323.18 1148.22,320.77 1150.10,319.28 1150.19,316.87 1152.06,315.38 1152.60,313.20 1152.74,315.47 1154.31,317.33 1153.97,319.74 1155.55,321.59 1155.20,324.01 1156.30,326.00 1156.40,326.60 1157.35,324.62 1156.83,322.32 1158.27,320.45 1157.76,318.15 1159.20,316.29 1158.68,313.98 1160.12,312.12 1159.60,309.81 1161.04,307.95 1160.53,305.65 1161.97,303.78 1161.45,301.48 1162.40,299.50 1163.40,297.62 1162.94,295.38 1164.43,293.62 1163.97,291.38 1165.46,289.62 1165.00,287.38 1166.00,285.50 1166.37,288.35 1167.70,290.90 1169.55,289.42 1170.25,286.98 1172.10,285.50 1172.04,287.83 1173.46,289.87 1173.40,292.20 1174.35,290.17 1173.83,287.81 1175.27,285.89 1174.75,283.53 1175.70,281.50 1176.84,279.74 1176.57,277.49 1178.18,275.89 1177.90,273.64 1179.52,272.04 1179.24,269.79 1180.85,268.19 1180.58,265.94 1182.19,264.34 1181.92,262.09 1183.53,260.49 1183.25,258.24 1184.87,256.64 1184.59,254.39 1186.20,252.79 1186.40,250.70 1186.41,253.04 1187.89,255.06 1187.41,257.51 1188.89,259.52 1188.41,261.98 1189.40,264.10 1190.23,262.18 1189.57,260.02 1190.40,258.10 1190.52,260.51 1192.08,262.53 1191.72,265.07 1193.28,267.09 1193.40,269.50 1194.71,267.67 1194.64,265.26 1196.41,263.62 1196.80,261.40 1198.80,258.80 1198.81,261.09 1200.29,263.04 1199.81,265.44 1200.80,267.50 1201.85,265.15 1201.45,262.45 1202.50,260.10 1202.48,262.21 1203.93,263.99 1203.43,266.21 1204.87,267.99 1204.37,270.21 1205.82,271.99 1205.80,274.10 1206.81,272.03 1206.37,269.61 1207.87,267.66 1207.43,265.24 1208.93,263.29 1208.49,260.87 1209.50,258.80 1209.51,261.03 1210.99,262.92 1210.51,265.26 1211.99,267.15 1211.51,269.50 1212.50,271.50 1213.52,269.68 1213.09,267.46 1214.60,265.77 1214.17,263.55 1215.67,261.86 1215.25,259.64 1216.75,257.96 1216.33,255.74 1217.83,254.05 1217.40,251.83 1218.91,250.14 1218.48,247.92 1219.50,246.10 1220.90,244.70 1222.09,242.87 1221.86,240.53 1223.51,238.87 1223.29,236.53 1224.94,234.87 1224.71,232.53 1225.90,230.70 1225.81,232.80 1227.19,234.60 1226.61,236.80 1227.50,238.70 1228.49,236.38 1228.01,233.75 1229.49,231.53 1229.50,229.00 1229.70,231.39 1231.33,233.36 1231.05,235.89 1232.20,238.00 1233.39,235.32 1233.60,232.40 1233.76,235.31 1234.90,238.00 1236.23,235.50 1236.60,232.70 1236.40,235.41 1237.20,238.00" fill="none" stroke="#000" stroke-width="1.25" stroke-linejoin="bevel"/>
<rect x="4.7" y="313.0" width="1.1" height="1.8" fill="#ff9800"/>
<rect x="10.5" y="298.8" width="1.1" height="1.8" fill="#ff9800"/>
<rect x="24.0" y="289.4" width="1.1" height="1.8" fill="#ff9800"/>
<rect x="58.3" y="417.6" width="1.1" height="1.8" fill="#ff9800"/>
<rect x="64.1" y="422.8" width="1.1" height="1.8" fill="#ff9800"/>
<rect x="73.8" y="407.3" width="1.1" height="1.8" fill="#ff9800"/>
<rect x="91.2" y="426.1" width="1.1" height="1.8" fill="#ff9800"/>
<rect x="110.3" y="453.7" width="1.1" height="1.8" fill="#ff9800"/>
<rect x="114.7" y="453.7" width="1.1" height="1.8" fill="#ff9800"/>
<rect x="121.3" y="457.0" width="1.1" height="1.8" fill="#ff9800"/>
<rect x="126.5" y="458.8" width="1.1" height="1.8" fill="#ff9800"/>
<rect x="134.6" y="456.6" width="1.1" height="1.8" fill="#ff9800"/>
<rect x="154.1" y="468.4" width="1.1" height="1.8" fill="#ff9800"/>
<rect x="171.3" y="449.6" width="1.1" height="1.8" fill="#ff9800"/>
<rect x="176.9" y="447.4" width="1.1" height="1.8" fill="#ff9800"/>
<rect x="180.9" y="447.8" width="1.1" height="1.8" fill="#ff9800"/>
<rect x="190.1" y="450.7" width="1.1" height="1.8" fill="#ff9800"/>
<rect x="198.2" y="469.5" width="1.1" height="1.8" fill="#ff9800"/>
<rect x="206.2" y="473.9" width="1.1" height="1.8" fill="#ff9800"/>
<rect x="228.7" y="428.4" width="1.1" height="1.8" fill="#ff9800"/>
<rect x="248.9" y="397.7" width="1.1" height="1.8" fill="#ff9800"/>
<rect x="258.6" y="421.9" width="1.1" height="1.8" fill="#ff9800"/>
<rect x="270.3" y="409.0" width="1.1" height="1.8" fill="#ff9800"/>
<rect x="276.8" y="408.2" width="1.1" height="1.8" fill="#ff9800"/>
<rect x="280.8" y="409.8" width="1.1" height="1.8" fill="#ff9800"/>
<rect x="286.1" y="401.7" width="1.1" height="1.8" fill="#ff9800"/>
<rect x="299.8" y="403.3" width="1.1" height="1.8" fill="#ff9800"/>
<rect x="313.9" y="369.4" width="1.1" height="1.8" fill="#ff9800"/>
<rect x="333.1" y="335.6" width="1.1" height="1.8" fill="#ff9800"/>
<rect x="350.8" y="341.8" width="1.1" height="1.8" fill="#ff9800"/>
<rect x="365.1" y="363.2" width="1.1" height="1.8" fill="#ff9800"/>
<rect x="372.2" y="354.3" width="1.1" height="1.8" fill="#ff9800"/>
<rect x="383.7" y="326.7" width="1.1" height="1.8" fill="#ff9800"/>
<rect x="395.7" y="312.5" width="1.1" height="1.8" fill="#ff9800"/>
<rect x="402.8" y="297.4" width="1.1" height="1.8" fill="#ff9800"/>
<rect x="413.5" y="293.4" width="1.1" height="1.8" fill="#ff9800"/>
<rect x="424.3" y="277.5" width="1.1" height="1.8" fill="#ff9800"/>
<rect x="429.8" y="281.9" width="1.1" height="1.8" fill="#ff9800"/>
<rect x="433.1" y="281.2" width="1.1" height="1.8" fill="#ff9800"/>
<rect x="437.1" y="272.3" width="1.1" height="1.8" fill="#ff9800"/>
<rect x="446.7" y="254.7" width="1.1" height="1.8" fill="#ff9800"/>
<rect x="462.9" y="281.9" width="1.1" height="1.8" fill="#ff9800"/>
<rect x="473.9" y="276.8" width="1.1" height="1.8" fill="#ff9800"/>
<rect x="479.1" y="269.4" width="1.1" height="1.8" fill="#ff9800"/>
<rect x="486.0" y="259.1" width="1.1" height="1.8" fill="#ff9800"/>
<rect x="491.9" y="265.0" width="1.1" height="1.8" fill="#ff9800"/>
<rect x="511.0" y="233.7" width="1.1" height="1.8" fill="#ff9800"/>
<rect x="516.6" y="233.7" width="1.1" height="1.8" fill="#ff9800"/>
<rect x="529.5" y="238.5" width="1.1" height="1.8" fill="#ff9800"/>
<rect x="533.2" y="245.3" width="1.1" height="1.8" fill="#ff9800"/>
<rect x="538.3" y="235.0" width="1.1" height="1.8" fill="#ff9800"/>
<rect x="542.4" y="228.4" width="1.1" height="1.8" fill="#ff9800"/>
<rect x="545.3" y="230.6" width="1.1" height="1.8" fill="#ff9800"/>
<rect x="547.9" y="230.6" width="1.1" height="1.8" fill="#ff9800"/>
<rect x="558.9" y="250.4" width="1.1" height="1.8" fill="#ff9800"/>
<rect x="562.6" y="241.6" width="1.1" height="1.8" fill="#ff9800"/>
<rect x="565.5" y="238.7" width="1.1" height="1.8" fill="#ff9800"/>
<rect x="571.0" y="227.6" width="1.1" height="1.8" fill="#ff9800"/>
<rect x="574.4" y="231.3" width="1.1" height="1.8" fill="#ff9800"/>
<rect x="578.0" y="226.9" width="1.1" height="1.8" fill="#ff9800"/>
<rect x="582.1" y="222.1" width="1.1" height="1.8" fill="#ff9800"/>
<rect x="589.4" y="236.4" width="1.1" height="1.8" fill="#ff9800"/>
<rect x="597.1" y="233.5" width="1.1" height="1.8" fill="#ff9800"/>
<rect x="613.3" y="218.1" width="1.1" height="1.8" fill="#ff9800"/>
<rect x="623.6" y="219.5" width="1.1" height="1.8" fill="#ff9800"/>
<rect x="630.2" y="199.0" width="1.1" height="1.8" fill="#ff9800"/>
<rect x="639.5" y="221.8" width="1.1" height="1.8" fill="#ff9800"/>
<rect x="643.5" y="216.6" width="1.1" height="1.8" fill="#ff9800"/>
<rect x="648.0" y="206.3" width="1.1" height="1.8" fill="#ff9800"/>
<rect x="650.9" y="205.9" width="1.1" height="1.8" fill="#ff9800"/>
<rect x="660.5" y="226.9" width="1.1" height="1.8" fill="#ff9800"/>
<rect x="669.6" y="220.3" width="1.1" height="1.8" fill="#ff9800"/>
<rect x="673.0" y="223.2" width="1.1" height="1.8" fill="#ff9800"/>
<rect x="683.6" y="219.2" width="1.1" height="1.8" fill="#ff9800"/>
<rect x="689.9" y="217.7" width="1.1" height="1.8" fill="#ff9800"/>
<rect x="696.9" y="224.0" width="1.1" height="1.8" fill="#ff9800"/>
<rect x="703.1" y="230.6" width="1.1" height="1.8" fill="#ff9800"/>
<rect x="711.5" y="229.8" width="1.1" height="1.8" fill="#ff9800"/>
<rect x="720.0" y="214.8" width="1.1" height="1.8" fill="#ff9800"/>
<rect x="730.3" y="201.5" width="1.1" height="1.8" fill="#ff9800"/>
<rect x="750.0" y="253.5" width="1.1" height="1.8" fill="#ff9800"/>
<rect x="753.2" y="250.3" width="1.1" height="1.8" fill="#ff9800"/>
<rect x="762.1" y="225.1" width="1.1" height="1.8" fill="#ff9800"/>
<rect x="778.4" y="238.8" width="1.1" height="1.8" fill="#ff9800"/>
<rect x="788.9" y="246.1" width="1.1" height="1.8" fill="#ff9800"/>
<rect x="802.0" y="222.0" width="1.1" height="1.8" fill="#ff9800"/>
<rect x="808.3" y="201.0" width="1.1" height="1.8" fill="#ff9800"/>
<rect x="818.8" y="224.1" width="1.1" height="1.8" fill="#ff9800"/>
<rect x="828.2" y="237.2" width="1.1" height="1.8" fill="#ff9800"/>
<rect x="841.9" y="273.4" width="1.1" height="1.8" fill="#ff9800"/>
<rect x="855.0" y="294.4" width="1.1" height="1.8" fill="#ff9800"/>
<rect x="859.2" y="288.1" width="1.1" height="1.8" fill="#ff9800"/>
<rect x="865.5" y="279.7" width="1.1" height="1.8" fill="#ff9800"/>
<rect x="888.9" y="270.4" width="1.1" height="1.8" fill="#ff9800"/>
<rect x="904.3" y="307.3" width="1.1" height="1.8" fill="#ff9800"/>
<rect x="910.5" y="294.1" width="1.1" height="1.8" fill="#ff9800"/>
<rect x="915.3" y="307.0" width="1.1" height="1.8" fill="#ff9800"/>
<rect x="921.6" y="306.6" width="1.1" height="1.8" fill="#ff9800"/>
<rect x="936.3" y="345.6" width="1.1" height="1.8" fill="#ff9800"/>
<rect x="939.6" y="344.8" width="1.1" height="1.8" fill="#ff9800"/>
<rect x="952.1" y="321.3" width="1.1" height="1.8" fill="#ff9800"/>
<rect x="954.6" y="321.3" width="1.1" height="1.8" fill="#ff9800"/>
<rect x="963.1" y="311.0" width="1.1" height="1.8" fill="#ff9800"/>
<rect x="973.4" y="322.0" width="1.1" height="1.8" fill="#ff9800"/>
<rect x="980.8" y="319.5" width="1.1" height="1.8" fill="#ff9800"/>
<rect x="990.7" y="319.8" width="1.1" height="1.8" fill="#ff9800"/>
<rect x="1000.2" y="303.7" width="1.1" height="1.8" fill="#ff9800"/>
<rect x="1006.1" y="316.9" width="1.1" height="1.8" fill="#ff9800"/>
<rect x="1011.5" y="313.6" width="1.1" height="1.8" fill="#ff9800"/>
<rect x="1020.0" y="293.3" width="1.1" height="1.8" fill="#ff9800"/>
<rect x="1024.3" y="298.7" width="1.1" height="1.8" fill="#ff9800"/>
<rect x="1032.8" y="320.0" width="1.1" height="1.8" fill="#ff9800"/>
<rect x="1050.5" y="361.8" width="1.1" height="1.8" fill="#ff9800"/>
<rect x="1062.3" y="373.5" width="1.1" height="1.8" fill="#ff9800"/>
<rect x="1069.2" y="372.4" width="1.1" height="1.8" fill="#ff9800"/>
<rect x="1089.0" y="330.2" width="1.1" height="1.8" fill="#ff9800"/>
<rect x="1094.9" y="329.7" width="1.1" height="1.8" fill="#ff9800"/>
<rect x="1106.1" y="309.3" width="1.1" height="1.8" fill="#ff9800"/>
<rect x="1123.2" y="311.0" width="1.1" height="1.8" fill="#ff9800"/>
<rect x="1136.1" y="320.6" width="1.1" height="1.8" fill="#ff9800"/>
<rect x="1152.1" y="312.6" width="1.1" height="1.8" fill="#ff9800"/>
<rect x="1165.5" y="284.9" width="1.1" height="1.8" fill="#ff9800"/>
<rect x="1171.6" y="284.9" width="1.1" height="1.8" fill="#ff9800"/>
<rect x="1185.9" y="250.1" width="1.1" height="1.8" fill="#ff9800"/>
<rect x="1189.9" y="257.5" width="1.1" height="1.8" fill="#ff9800"/>
<rect x="1198.3" y="258.2" width="1.1" height="1.8" fill="#ff9800"/>
<rect x="1202.0" y="259.5" width="1.1" height="1.8" fill="#ff9800"/>
<rect x="1209.0" y="258.2" width="1.1" height="1.8" fill="#ff9800"/>
<rect x="1225.4" y="230.1" width="1.1" height="1.8" fill="#ff9800"/>
<rect x="1229.0" y="228.4" width="1.1" height="1.8" fill="#ff9800"/>
<rect x="1233.1" y="231.8" width="1.1" height="1.8" fill="#ff9800"/>
<rect x="1236.1" y="232.1" width="1.1" height="1.8" fill="#ff9800"/>
<text x="367.3" y="334.0" font-size="9" fill="#2a2e39" stroke="#2a2e39" stroke-width="0.25" text-anchor="middle" textLength="6.8" lengthAdjust="spacingAndGlyphs">-1</text>
<text x="367.3" y="344.7" font-size="9" fill="#2a2e39" stroke="#2a2e39" stroke-width="0.25" text-anchor="middle" textLength="20.4" lengthAdjust="spacingAndGlyphs">Short</text>
<rect x="366.9" y="353.0" width="2.3" height="5.3" fill="#f7183c"/>
<path d="M363.7 357.8 H372.3 L368.0 363.0 Z" fill="#f7183c"/>
<path d="M363.9 370 L368.3 373.4 L363.9 376.7 Z" fill="#e11df2"/>
<path d="M373.1 368.5 L368.7 372.1 L373.1 375.7 Z" fill="#f7183c"/>
<rect x="364.4" y="383.4" width="8.7" height="1.4" fill="#e11df2"/>
<path d="M364.4 390.2 H373.0 L368.7 385.0 Z" fill="#e11df2"/>
<rect x="367.6" y="389.7" width="2.3" height="6.3" fill="#e11df2"/>
<text x="368.0" y="408.7" font-size="9" fill="#2a2e39" stroke="#2a2e39" stroke-width="0.25" text-anchor="middle" textLength="14.0" lengthAdjust="spacingAndGlyphs">TP1</text>
<text x="369.0" y="419.3" font-size="9" fill="#2a2e39" stroke="#2a2e39" stroke-width="0.25" text-anchor="middle" textLength="6.8" lengthAdjust="spacingAndGlyphs">+1</text>
<path d="M361.5 417.4 H373.6 L367.6 428.5 Z" fill="#ff5252"/>
<path d="M512.9 143 H525 L519.0 154.7 Z" fill="#ff5252"/>
<text x="519.0" y="203.5" font-size="9" fill="#2a2e39" stroke="#2a2e39" stroke-width="0.25" text-anchor="middle" textLength="6.8" lengthAdjust="spacingAndGlyphs">-1</text>
<text x="518.6" y="213.8" font-size="9" fill="#2a2e39" stroke="#2a2e39" stroke-width="0.25" text-anchor="middle" textLength="20.2" lengthAdjust="spacingAndGlyphs">Short</text>
<rect x="517.9" y="223.4" width="2.3" height="5.6" fill="#f7183c"/>
<path d="M514.7 228.5 H523.3 L519.0 233.7 Z" fill="#f7183c"/>
<path d="M515.3 241.3 L519.5 244.6 L515.3 247.9 Z" fill="#e11df2"/>
<path d="M524.5 238.5 L520.1 241.6 L524.5 244.7 Z" fill="#f7183c"/>
<rect x="515.0" y="253.9" width="9.0" height="1.4" fill="#e11df2"/>
<path d="M515.2 260.7 H523.8 L519.5 255.5 Z" fill="#e11df2"/>
<rect x="518.4" y="260.2" width="2.3" height="6.5" fill="#e11df2"/>
<text x="519.0" y="279.0" font-size="9" fill="#2a2e39" stroke="#2a2e39" stroke-width="0.25" text-anchor="middle" textLength="14.0" lengthAdjust="spacingAndGlyphs">TP1</text>
<text x="519.0" y="290.0" font-size="9" fill="#2a2e39" stroke="#2a2e39" stroke-width="0.25" text-anchor="middle" textLength="6.8" lengthAdjust="spacingAndGlyphs">+1</text>
<path d="M599.8 197.9 H611.9 L605.8 186 Z" fill="#4caf50"/>
<text x="606.0" y="200.7" font-size="9" fill="#2a2e39" stroke="#2a2e39" stroke-width="0.25" text-anchor="middle" textLength="6.8" lengthAdjust="spacingAndGlyphs">-1</text>
<text x="606.9" y="211.5" font-size="9" fill="#2a2e39" stroke="#2a2e39" stroke-width="0.25" text-anchor="middle" textLength="13.6" lengthAdjust="spacingAndGlyphs">TP1</text>
<rect x="605.2" y="220.0" width="2.3" height="6.0" fill="#e11df2"/>
<path d="M602.1 225.5 H610.7 L606.4 230.7 Z" fill="#e11df2"/>
<rect x="602.0" y="231.0" width="8.8" height="1.4" fill="#e11df2"/>
<path d="M601 240.9 L604.9 244.3 L601 247.7 Z" fill="#2962ff"/>
<path d="M611.7 239.8 L607.4 243.2 L611.7 246.5 Z" fill="#e11df2"/>
<path d="M601.5 257.4 H610.1 L605.8 252.2 Z" fill="#2962ff"/>
<rect x="604.6" y="256.9" width="2.3" height="6.6" fill="#2962ff"/>
<text x="606.0" y="276.0" font-size="9" fill="#2a2e39" stroke="#2a2e39" stroke-width="0.25" text-anchor="middle" textLength="18.0" lengthAdjust="spacingAndGlyphs">Long</text>
<text x="606.0" y="286.0" font-size="9" fill="#2a2e39" stroke="#2a2e39" stroke-width="0.25" text-anchor="middle" textLength="6.8" lengthAdjust="spacingAndGlyphs">+1</text>
<text x="855.8" y="266.9" font-size="9" fill="#2a2e39" stroke="#2a2e39" stroke-width="0.25" text-anchor="middle" textLength="6.8" lengthAdjust="spacingAndGlyphs">-1</text>
<text x="856.0" y="277.1" font-size="9" fill="#2a2e39" stroke="#2a2e39" stroke-width="0.25" text-anchor="middle" textLength="20.9" lengthAdjust="spacingAndGlyphs">Short</text>
<path d="M850 283.3 H861.5 L855.8 293.5 Z" fill="#ff5252"/>
<rect x="854.4" y="285.0" width="2.3" height="6.9" fill="#f7183c"/>
<path d="M851.2 291.4 H859.8 L855.5 296.6 Z" fill="#f7183c"/>
<path d="M851.3 300.2 L855.8 303.5 L851.3 306.8 Z" fill="#e11df2"/>
<path d="M860.6 303.3 L856.6 306.4 L860.6 309.5 Z" fill="#f7183c"/>
<rect x="852.0" y="312.7" width="8.2" height="1.4" fill="#e11df2"/>
<path d="M851.8 319.5 H860.4 L856.1 314.3 Z" fill="#e11df2"/>
<rect x="855.0" y="319.0" width="2.3" height="5.6" fill="#e11df2"/>
<text x="856.0" y="337.5" font-size="9" fill="#2a2e39" stroke="#2a2e39" stroke-width="0.25" text-anchor="middle" textLength="17.3" lengthAdjust="spacingAndGlyphs">Stop</text>
<text x="856.0" y="347.7" font-size="9" fill="#2a2e39" stroke="#2a2e39" stroke-width="0.25" text-anchor="middle" textLength="6.8" lengthAdjust="spacingAndGlyphs">+1</text>
<text x="1055.5" y="335.3" font-size="9" fill="#2a2e39" stroke="#2a2e39" stroke-width="0.25" text-anchor="middle" textLength="6.8" lengthAdjust="spacingAndGlyphs">-1</text>
<text x="1055.2" y="345.8" font-size="9" fill="#2a2e39" stroke="#2a2e39" stroke-width="0.25" text-anchor="middle" textLength="20.9" lengthAdjust="spacingAndGlyphs">Short</text>
<rect x="1053.8" y="354.0" width="2.3" height="6.5" fill="#f7183c"/>
<path d="M1050.7 360.0 H1059.3 L1055.0 365.2 Z" fill="#f7183c"/>
<path d="M1060 369.8 L1055.8 373.2 L1060 376.6 Z" fill="#f7183c"/>
<path d="M1052 374.9 L1055.5 378.0 L1052 381.1 Z" fill="#e11df2"/>
<rect x="1052.0" y="387.0" width="8.8" height="1.4" fill="#e11df2"/>
<path d="M1052.1 393.8 H1060.7 L1056.4 388.6 Z" fill="#e11df2"/>
<rect x="1055.2" y="393.3" width="2.3" height="5.9" fill="#e11df2"/>
<text x="1056.0" y="411.6" font-size="9" fill="#2a2e39" stroke="#2a2e39" stroke-width="0.25" text-anchor="middle" textLength="13.6" lengthAdjust="spacingAndGlyphs">TP1</text>
<path d="M1049.2 415 H1061.4 L1055.3 426.3 Z" fill="#ff5252"/>
<text x="1056.0" y="423.0" font-size="9" fill="#2a2e39" stroke="#2a2e39" stroke-width="0.25" text-anchor="middle" textLength="6.8" lengthAdjust="spacingAndGlyphs">+1</text>
<text x="211.4" y="445.9" font-size="9" fill="#2a2e39" stroke="#2a2e39" stroke-width="0.25" text-anchor="middle" textLength="6.8" lengthAdjust="spacingAndGlyphs">-1</text>
<text x="217.0" y="442.7" font-size="9" fill="#2a2e39" stroke="#2a2e39" stroke-width="0.25" text-anchor="middle" textLength="3.5" lengthAdjust="spacingAndGlyphs">1</text>
<text x="214.6" y="452.0" font-size="9" fill="#2a2e39" stroke="#2a2e39" stroke-width="0.25" text-anchor="middle" textLength="12.1" lengthAdjust="spacingAndGlyphs">TP1</text>
<text x="210.2" y="457.5" font-size="9" fill="#2a2e39" stroke="#2a2e39" stroke-width="0.25" text-anchor="middle" textLength="20.9" lengthAdjust="spacingAndGlyphs">Short</text>
<rect x="213.8" y="461.7" width="2.3" height="5.6" fill="#e11df2"/>
<path d="M210.6 466.8 H219.2 L214.9 472.0 Z" fill="#e11df2"/>
<rect x="210.9" y="472.3" width="7.9" height="1.4" fill="#e11df2"/>
<rect x="208.3" y="465.9" width="2.3" height="6.0" fill="#f7183c"/>
<path d="M205.2 471.4 H213.8 L209.5 476.6 Z" fill="#f7183c"/>
<path d="M219.9 479.8 L216 483.1 L219.9 486.3 Z" fill="#e11df2"/>
<path d="M214.9 481.2 L210.9 484.4 L214.9 487.7 Z" fill="#f7183c"/>
<path d="M205.3 484.5 L209.5 487.8 L205.3 491 Z" fill="#e11df2"/>
<rect x="206.3" y="497.2" width="8.0" height="1.4" fill="#e11df2"/>
<path d="M206.0 504.0 H214.6 L210.3 498.8 Z" fill="#e11df2"/>
<rect x="209.2" y="503.5" width="2.3" height="6.1" fill="#e11df2"/>
<text x="213.7" y="518.9" font-size="9" fill="#2a2e39" stroke="#2a2e39" stroke-width="0.25" text-anchor="middle" textLength="20.5" lengthAdjust="spacingAndGlyphs">Long</text>
<text x="211.0" y="521.7" font-size="9" fill="#2a2e39" stroke="#2a2e39" stroke-width="0.25" text-anchor="middle" textLength="13.9" lengthAdjust="spacingAndGlyphs">TP1</text>
<text x="210.0" y="531.9" font-size="9" fill="#2a2e39" stroke="#2a2e39" stroke-width="0.25" text-anchor="middle" textLength="6.8" lengthAdjust="spacingAndGlyphs">+1</text>
<text x="217.5" y="527.0" font-size="9" fill="#2a2e39" stroke="#2a2e39" stroke-width="0.25" text-anchor="middle" textLength="3.5" lengthAdjust="spacingAndGlyphs">1</text>
<text x="18.0" y="254.2" font-size="9" fill="#2a2e39" stroke="#2a2e39" stroke-width="0.25" text-anchor="middle" textLength="6.6" lengthAdjust="spacingAndGlyphs">-1</text>
<text x="26.6" y="260.4" font-size="9" fill="#2a2e39" stroke="#2a2e39" stroke-width="0.25" text-anchor="middle" textLength="3.5" lengthAdjust="spacingAndGlyphs">1</text>
<text x="17.3" y="265.3" font-size="9" fill="#2a2e39" stroke="#2a2e39" stroke-width="0.25" text-anchor="middle" textLength="14.2" lengthAdjust="spacingAndGlyphs">TP1</text>
<text x="23.8" y="272.4" font-size="9" fill="#2a2e39" stroke="#2a2e39" stroke-width="0.25" text-anchor="middle" textLength="26.2" lengthAdjust="spacingAndGlyphs">SShort</text>
<rect x="24.9" y="263.2" width="6.6" height="1.4" fill="#ff5252"/>
<rect x="17.1" y="274.2" width="2.3" height="5.9" fill="#e11df2"/>
<path d="M13.9 279.6 H22.5 L18.2 284.8 Z" fill="#e11df2"/>
<rect x="14.2" y="285.1" width="7.6" height="1.4" fill="#e11df2"/>
<rect x="24.7" y="280.0" width="2.3" height="5.9" fill="#f7183c"/>
<path d="M21.5 285.4 H30.1 L25.8 290.6 Z" fill="#f7183c"/>
<path d="M17.8 288 H23.1 L20.5 291.5 Z" fill="#f7183c"/>
<path d="M12.9 295.5 L16.4 298.4 L12.9 301.3 Z" fill="#2962ff"/>
<path d="M17.3 294.2 L21.3 297.8 L17.3 301.3 Z" fill="#e11df2"/>
<path d="M31.1 295 L27.1 298.1 L31.1 301.3 Z" fill="#f7183c"/>
<path d="M21.8 299.5 L25.8 302.1 L21.8 304.8 Z" fill="#e11df2"/>
<path d="M11.1 312.4 H16.9 L14.0 305.7 Z" fill="#4caf50"/>
<path d="M13.0 312.7 H21.6 L17.3 307.5 Z" fill="#2962ff"/>
<rect x="16.2" y="312.2" width="2.3" height="5.1" fill="#2962ff"/>
<rect x="17.8" y="306.4" width="8.0" height="1.4" fill="#e11df2"/>
<path d="M17.0 313.2 H25.6 L21.3 308.0 Z" fill="#e11df2"/>
<rect x="20.2" y="312.7" width="2.3" height="5.5" fill="#e11df2"/>
<rect x="22.6" y="310.8" width="8.0" height="1.4" fill="#e11df2"/>
<path d="M22.3 317.6 H30.9 L26.6 312.4 Z" fill="#e11df2"/>
<rect x="25.5" y="317.1" width="2.3" height="6.4" fill="#e11df2"/>
<text x="19.0" y="329.7" font-size="9" fill="#2a2e39" stroke="#2a2e39" stroke-width="0.25" text-anchor="middle" textLength="22.2" lengthAdjust="spacingAndGlyphs">LStop</text>
<text x="26.2" y="334.1" font-size="9" fill="#2a2e39" stroke="#2a2e39" stroke-width="0.25" text-anchor="middle" textLength="14.2" lengthAdjust="spacingAndGlyphs">TP1</text>
<text x="18.6" y="340.0" font-size="9" fill="#2a2e39" stroke="#2a2e39" stroke-width="0.25" text-anchor="middle" textLength="11.5" lengthAdjust="spacingAndGlyphs">++1</text>
<text x="26.4" y="345.7" font-size="9" fill="#2a2e39" stroke="#2a2e39" stroke-width="0.25" text-anchor="middle" textLength="8.4" lengthAdjust="spacingAndGlyphs">+1</text>
<rect x="208.9" y="673.4" width="1.2" height="1.2" fill="#ff8a80"/>
<rect x="208.9" y="678.9" width="1.2" height="1.2" fill="#82b1ff"/>
<rect x="208.9" y="683.9" width="1.2" height="1.2" fill="#a5d6a7"/>
<rect x="213.4" y="676.9" width="1.2" height="1.2" fill="#a5d6a7"/>
<rect x="213.4" y="682.4" width="1.2" height="1.2" fill="#82b1ff"/>
<rect x="213.4" y="687.4" width="1.2" height="1.2" fill="#ff8a80"/>
<rect x="518.1999999999999" y="160.4" width="1.2" height="1.2" fill="#ff8a80"/>
<rect x="518.1999999999999" y="166.1" width="1.2" height="1.2" fill="#82b1ff"/>
<rect x="518.1999999999999" y="171.9" width="1.2" height="1.2" fill="#a5d6a7"/>
<rect x="605.4" y="164.9" width="1.2" height="1.2" fill="#a5d6a7"/>
<rect x="605.4" y="170.4" width="1.2" height="1.2" fill="#82b1ff"/>
<rect x="605.4" y="177.4" width="1.2" height="1.2" fill="#ff8a80"/>
<rect x="366.9" y="435.2" width="1.2" height="1.2" fill="#ff8a80"/>
<rect x="1054.4" y="431.4" width="1.2" height="1.2" fill="#ff8a80"/>
<rect x="1054.4" y="437.4" width="1.2" height="1.2" fill="#82b1ff"/>
<rect x="1054.4" y="443.4" width="1.2" height="1.2" fill="#a5d6a7"/>
<path d="M203.8 656 H215.8 L209.8 667.6 Z" fill="#ff5252"/>
<path d="M208 708.7 H220 L214.0 696 Z" fill="#4caf50"/>
<line x1="0" y1="238.5" x2="1272" y2="238.5" stroke="#131722" stroke-opacity="0.8" stroke-width="1" stroke-dasharray="1,1.5"/>
<text x="1361.3" y="33.3" font-size="10" fill="#131722" stroke="#131722" stroke-width="0.25" text-anchor="end" textLength="39.7" lengthAdjust="spacingAndGlyphs">27,200.00</text>
<text x="1361.3" y="64.3" font-size="10" fill="#131722" stroke="#131722" stroke-width="0.25" text-anchor="end" textLength="39.7" lengthAdjust="spacingAndGlyphs">27,000.00</text>
<text x="1361.3" y="95.2" font-size="10" fill="#131722" stroke="#131722" stroke-width="0.25" text-anchor="end" textLength="39.7" lengthAdjust="spacingAndGlyphs">26,800.00</text>
<text x="1361.3" y="126.2" font-size="10" fill="#131722" stroke="#131722" stroke-width="0.25" text-anchor="end" textLength="39.7" lengthAdjust="spacingAndGlyphs">26,600.00</text>
<text x="1361.3" y="157.2" font-size="10" fill="#131722" stroke="#131722" stroke-width="0.25" text-anchor="end" textLength="39.7" lengthAdjust="spacingAndGlyphs">26,400.00</text>
<text x="1361.3" y="188.2" font-size="10" fill="#131722" stroke="#131722" stroke-width="0.25" text-anchor="end" textLength="39.7" lengthAdjust="spacingAndGlyphs">26,200.00</text>
<text x="1361.3" y="219.2" font-size="10" fill="#131722" stroke="#131722" stroke-width="0.25" text-anchor="end" textLength="39.7" lengthAdjust="spacingAndGlyphs">26,000.00</text>
<text x="1361.3" y="250.1" font-size="10" fill="#131722" stroke="#131722" stroke-width="0.25" text-anchor="end" textLength="39.7" lengthAdjust="spacingAndGlyphs">25,800.00</text>
<text x="1361.3" y="281.1" font-size="10" fill="#131722" stroke="#131722" stroke-width="0.25" text-anchor="end" textLength="39.7" lengthAdjust="spacingAndGlyphs">25,600.00</text>
<text x="1361.3" y="312.1" font-size="10" fill="#131722" stroke="#131722" stroke-width="0.25" text-anchor="end" textLength="39.7" lengthAdjust="spacingAndGlyphs">25,400.00</text>
<text x="1361.3" y="343.1" font-size="10" fill="#131722" stroke="#131722" stroke-width="0.25" text-anchor="end" textLength="39.7" lengthAdjust="spacingAndGlyphs">25,200.00</text>
<text x="1361.3" y="374.0" font-size="10" fill="#131722" stroke="#131722" stroke-width="0.25" text-anchor="end" textLength="39.7" lengthAdjust="spacingAndGlyphs">25,000.00</text>
<text x="1361.3" y="405.0" font-size="10" fill="#131722" stroke="#131722" stroke-width="0.25" text-anchor="end" textLength="39.7" lengthAdjust="spacingAndGlyphs">24,800.00</text>
<text x="1361.3" y="436.0" font-size="10" fill="#131722" stroke="#131722" stroke-width="0.25" text-anchor="end" textLength="39.7" lengthAdjust="spacingAndGlyphs">24,600.00</text>
<text x="1361.3" y="467.0" font-size="10" fill="#131722" stroke="#131722" stroke-width="0.25" text-anchor="end" textLength="39.7" lengthAdjust="spacingAndGlyphs">24,400.00</text>
<text x="1361.3" y="497.9" font-size="10" fill="#131722" stroke="#131722" stroke-width="0.25" text-anchor="end" textLength="39.7" lengthAdjust="spacingAndGlyphs">24,200.00</text>
<text x="1361.3" y="528.9" font-size="10" fill="#131722" stroke="#131722" stroke-width="0.25" text-anchor="end" textLength="39.7" lengthAdjust="spacingAndGlyphs">24,000.00</text>
<text x="1361.3" y="559.9" font-size="10" fill="#131722" stroke="#131722" stroke-width="0.25" text-anchor="end" textLength="39.7" lengthAdjust="spacingAndGlyphs">23,800.00</text>
<text x="1361.3" y="590.9" font-size="10" fill="#131722" stroke="#131722" stroke-width="0.25" text-anchor="end" textLength="39.7" lengthAdjust="spacingAndGlyphs">23,600.00</text>
<text x="1361.3" y="621.8" font-size="10" fill="#131722" stroke="#131722" stroke-width="0.25" text-anchor="end" textLength="39.7" lengthAdjust="spacingAndGlyphs">23,400.00</text>
<text x="1361.3" y="652.8" font-size="10" fill="#131722" stroke="#131722" stroke-width="0.25" text-anchor="end" textLength="39.7" lengthAdjust="spacingAndGlyphs">23,200.00</text>
<text x="1361.3" y="683.8" font-size="10" fill="#131722" stroke="#131722" stroke-width="0.25" text-anchor="end" textLength="39.7" lengthAdjust="spacingAndGlyphs">23,000.00</text>
<text x="1361.3" y="714.8" font-size="10" fill="#131722" stroke="#131722" stroke-width="0.25" text-anchor="end" textLength="39.7" lengthAdjust="spacingAndGlyphs">22,800.00</text>
<text x="1361.3" y="745.7" font-size="10" fill="#131722" stroke="#131722" stroke-width="0.25" text-anchor="end" textLength="39.7" lengthAdjust="spacingAndGlyphs">22,600.00</text>
<text x="1361.3" y="776.7" font-size="10" fill="#131722" stroke="#131722" stroke-width="0.25" text-anchor="end" textLength="39.7" lengthAdjust="spacingAndGlyphs">22,400.00</text>
<rect x="1316" y="776" width="52" height="20" fill="#ffffff"/>
<text x="120.8" y="789.7" font-size="10" fill="#131722" stroke="#131722" stroke-width="0.25" text-anchor="middle" textLength="9.3" lengthAdjust="spacingAndGlyphs">21</text>
<text x="264.8" y="789.7" font-size="10" fill="#131722" stroke="#131722" stroke-width="0.25" text-anchor="middle" textLength="9.3" lengthAdjust="spacingAndGlyphs">23</text>
<text x="337.7" y="789.7" font-size="10" fill="#131722" stroke="#131722" stroke-width="0.25" text-anchor="middle" textLength="9.3" lengthAdjust="spacingAndGlyphs">25</text>
<text x="401.2" y="789.7" font-size="10" fill="#131722" stroke="#131722" stroke-width="0.25" text-anchor="middle" textLength="9.3" lengthAdjust="spacingAndGlyphs">26</text>
<text x="457.9" y="789.7" font-size="10" fill="#131722" font-weight="bold" text-anchor="middle" textLength="14.7" lengthAdjust="spacingAndGlyphs">Dec</text>
<text x="542.5" y="789.7" font-size="10" fill="#131722" stroke="#131722" stroke-width="0.25" text-anchor="middle" textLength="4.7" lengthAdjust="spacingAndGlyphs">3</text>
<text x="612.0" y="789.7" font-size="10" fill="#131722" stroke="#131722" stroke-width="0.25" text-anchor="middle" textLength="4.7" lengthAdjust="spacingAndGlyphs">5</text>
<text x="670.0" y="789.7" font-size="10" fill="#131722" stroke="#131722" stroke-width="0.25" text-anchor="middle" textLength="4.7" lengthAdjust="spacingAndGlyphs">9</text>
<text x="750.0" y="789.7" font-size="10" fill="#131722" stroke="#131722" stroke-width="0.25" text-anchor="middle" textLength="9.3" lengthAdjust="spacingAndGlyphs">11</text>
<text x="818.8" y="789.7" font-size="10" fill="#131722" stroke="#131722" stroke-width="0.25" text-anchor="middle" textLength="9.3" lengthAdjust="spacingAndGlyphs">12</text>
<text x="875.0" y="789.7" font-size="10" fill="#131722" stroke="#131722" stroke-width="0.25" text-anchor="middle" textLength="9.3" lengthAdjust="spacingAndGlyphs">14</text>
<text x="940.0" y="789.7" font-size="10" fill="#131722" stroke="#131722" stroke-width="0.25" text-anchor="middle" textLength="9.3" lengthAdjust="spacingAndGlyphs">16</text>
<text x="1013.0" y="789.7" font-size="10" fill="#131722" stroke="#131722" stroke-width="0.25" text-anchor="middle" textLength="9.3" lengthAdjust="spacingAndGlyphs">17</text>
<text x="1075.0" y="789.7" font-size="10" fill="#131722" stroke="#131722" stroke-width="0.25" text-anchor="middle" textLength="9.3" lengthAdjust="spacingAndGlyphs">18</text>
<text x="1146.4" y="789.7" font-size="10" fill="#131722" stroke="#131722" stroke-width="0.25" text-anchor="middle" textLength="9.3" lengthAdjust="spacingAndGlyphs">19</text>
<text x="1200.0" y="789.7" font-size="10" fill="#131722" stroke="#131722" stroke-width="0.25" text-anchor="middle" textLength="9.3" lengthAdjust="spacingAndGlyphs">23</text>
<text x="1260.0" y="789.7" font-size="10" fill="#131722" stroke="#131722" stroke-width="0.25" text-anchor="middle" textLength="9.3" lengthAdjust="spacingAndGlyphs">29</text>
<text x="1407.0" y="789.7" font-size="10" fill="#131722" stroke="#131722" stroke-width="0.25" text-anchor="middle" textLength="23.0" lengthAdjust="spacingAndGlyphs">12:00</text>
<text x="1452.0" y="789.7" font-size="10" fill="#131722" font-weight="bold" text-anchor="middle" textLength="10.0" lengthAdjust="spacingAndGlyphs">28</text>
<text x="1481.0" y="789.7" font-size="10" fill="#131722" stroke="#131722" stroke-width="0.25" textLength="14.0" lengthAdjust="spacingAndGlyphs">18:</text>
<path d="M1337.5 786.5 L1339.8 782.2 H1344.2 L1346.5 786.5 L1344.2 790.8 H1339.8 Z" fill="none" stroke="#131722" stroke-width="1"/><circle cx="1342" cy="786.5" r="1.6" fill="none" stroke="#131722" stroke-width="1"/>
<text x="4.4" y="16.9" font-size="12.2" fill="#131722" stroke="#131722" stroke-width="0.25" textLength="187.6" lengthAdjust="spacingAndGlyphs">NQ1! · 6 · CME · Renko [ATR(14), 10]</text>
<circle cx="205" cy="13" r="7" fill="#e9eaee"/><rect x="201" y="12" width="8" height="2" rx="1" fill="#9598a1"/>
<rect x="3.5" y="25.5" width="60" height="25" rx="4" fill="#fff" stroke="#f23645" stroke-width="1"/>
<text x="33.3" y="36.0" font-size="8.7" fill="#f23645" font-weight="bold" text-anchor="middle" textLength="43.0" lengthAdjust="spacingAndGlyphs">25,850.00</text>
<text x="33.0" y="46.0" font-size="8.7" fill="#f7525f" stroke="#f7525f" stroke-width="0.25" text-anchor="middle" textLength="18.0" lengthAdjust="spacingAndGlyphs">SELL</text>
<text x="69.5" y="39.7" font-size="7.6" fill="#333333" stroke="#333333" stroke-width="0.25" textLength="15.1" lengthAdjust="spacingAndGlyphs">9.00</text>
<rect x="90.5" y="25.5" width="60" height="25" rx="4" fill="#fff" stroke="#2962ff" stroke-width="1"/>
<text x="120.4" y="36.0" font-size="8.7" fill="#2962ff" font-weight="bold" text-anchor="middle" textLength="43.0" lengthAdjust="spacingAndGlyphs">25,859.00</text>
<text x="120.4" y="46.0" font-size="8.7" fill="#5b8bf7" stroke="#5b8bf7" stroke-width="0.25" text-anchor="middle" textLength="15.0" lengthAdjust="spacingAndGlyphs">BUY</text>
<rect x="3.5" y="56.5" width="28" height="15" rx="2" fill="#fff" stroke="#e0e3eb" stroke-width="1"/>
<path d="M8.3 62.3 L11.5 65.3 L14.7 62.3" fill="none" stroke="#131722" stroke-width="1.1"/>
<text x="18.8" y="66.5" font-size="9.5" fill="#131722" stroke="#131722" stroke-width="0.25" textLength="9.6" lengthAdjust="spacingAndGlyphs">28</text>
<rect x="1241" y="8.5" width="66.5" height="127.2" fill="#e1e2e6"/>
<text x="1258.8" y="17.3" font-size="7.2" fill="#6a6d78" stroke="#6a6d78" stroke-width="0.25" text-anchor="middle">Day</text>
<text x="1292.4" y="17.3" font-size="7.2" fill="#4caf50" stroke="#4caf50" stroke-width="0.25" text-anchor="middle">FRI</text>
<text x="1258.8" y="30.1" font-size="7.2" fill="#6a6d78" stroke="#6a6d78" stroke-width="0.25" text-anchor="middle">Session</text>
<text x="1292.4" y="30.1" font-size="7.2" fill="#f23645" stroke="#f23645" stroke-width="0.25" text-anchor="middle">Outside</text>
<text x="1258.8" y="42.9" font-size="7.2" fill="#6a6d78" stroke="#6a6d78" stroke-width="0.25" text-anchor="middle">Direction</text>
<text x="1292.4" y="42.9" font-size="7.2" fill="#ffeb3b" stroke="#ffeb3b" stroke-width="0.25" text-anchor="middle">L/S</text>
<text x="1258.8" y="55.6" font-size="7.2" fill="#6a6d78" stroke="#6a6d78" stroke-width="0.25" text-anchor="middle">Position</text>
<text x="1292.4" y="55.6" font-size="7.2" fill="#787b86" stroke="#787b86" stroke-width="0.25" text-anchor="middle">FLAT</text>
<text x="1258.8" y="68.4" font-size="7.2" fill="#6a6d78" stroke="#6a6d78" stroke-width="0.25" text-anchor="middle">Entry</text>
<text x="1292.4" y="68.4" font-size="7.2" fill="#2962ff" stroke="#2962ff" stroke-width="0.25" text-anchor="middle">-</text>
<text x="1258.8" y="81.2" font-size="7.2" fill="#6a6d78" stroke="#6a6d78" stroke-width="0.25" text-anchor="middle">Stop</text>
<text x="1292.4" y="81.2" font-size="7.2" fill="#f23645" stroke="#f23645" stroke-width="0.25" text-anchor="middle">-</text>
<text x="1258.8" y="94.0" font-size="7.2" fill="#6a6d78" stroke="#6a6d78" stroke-width="0.25" text-anchor="middle">BE</text>
<text x="1292.4" y="94.0" font-size="7.2" fill="#787b86" stroke="#787b86" stroke-width="0.25" text-anchor="middle">Wait</text>
<text x="1258.8" y="106.8" font-size="7.2" fill="#6a6d78" stroke="#6a6d78" stroke-width="0.25" text-anchor="middle">Trail</text>
<text x="1292.4" y="106.8" font-size="7.2" fill="#787b86" stroke="#787b86" stroke-width="0.25" text-anchor="middle">Wait</text>
<text x="1258.8" y="119.5" font-size="7.2" fill="#6a6d78" stroke="#6a6d78" stroke-width="0.25" text-anchor="middle">TPs Hit</text>
<text x="1292.4" y="119.5" font-size="7.2" fill="#4caf50" stroke="#4caf50" stroke-width="0.25" text-anchor="middle">-/-</text>
<text x="1258.8" y="132.3" font-size="7.2" fill="#6a6d78" stroke="#6a6d78" stroke-width="0.25" text-anchor="middle">Day Mult</text>
<text x="1292.4" y="132.3" font-size="7.2" fill="#ffeb3b" stroke="#ffeb3b" stroke-width="0.25" text-anchor="middle">S:1 T:1</text>
<rect x="1318.5" y="4.5" width="47" height="19" rx="2.5" fill="#fff" stroke="#e9e9ea" stroke-width="1"/>
<text x="1321.0" y="17.0" font-size="8.5" fill="#131722" font-weight="bold" textLength="16.0" lengthAdjust="spacingAndGlyphs">USD</text>
<path d="M1357 13 L1359.3 15 L1361.6 13" fill="none" stroke="#131722" stroke-width="1"/>
<path d="M1275 232 H1315.5 V245 H1275 Q1272 245 1272 242 V235 Q1272 232 1275 232 Z" fill="#000"/>
<text x="1293.6" y="242.0" font-size="9" fill="#ffffff" font-weight="bold" text-anchor="middle" textLength="37.0" lengthAdjust="spacingAndGlyphs">NQH2026</text>
<rect x="1315.5" y="232" width="49.5" height="13.6" fill="#ffa726"/><rect x="1315.5" y="232" width="49.5" height="1" fill="#131722"/>
<text x="1361.3" y="242.5" font-size="10" fill="#131722" stroke="#131722" stroke-width="0.25" text-anchor="end" textLength="39.7" lengthAdjust="spacingAndGlyphs">25,856.00</text>
<rect x="1368" y="2" width="2" height="794" fill="#2a2a2a"/>
<rect x="1380.1" y="-2.5" width="4.400000000000091" height="526" fill="#ff9800" stroke="#000" stroke-width="1"/>
<rect x="1400.5" y="-2.5" width="4" height="526" fill="#ff9800" stroke="#000" stroke-width="1"/>
<rect x="1407" y="2" width="1" height="521" fill="#ffb74d"/>
<rect x="1405.0" y="523.5" width="4.7999999999999545" height="253" fill="#ff9800" stroke="#000" stroke-width="1"/>
<path d="M1400 523.5 H1410" stroke="#000" stroke-width="1"/>
<rect x="1415.5" y="523.5" width="4.5" height="253" fill="#fff" stroke="#555" stroke-width="1"/>
<rect x="1428" y="650" width="1" height="127" fill="#ffb74d"/>
<rect x="1436.5" y="523.5" width="4.5" height="253" fill="#fff" stroke="#333" stroke-width="1"/>
<rect x="1440.9" y="-2.5" width="4.599999999999909" height="526" fill="#fff" stroke="#333" stroke-width="1"/>
<path d="M1436 523.5 H1446" stroke="#000" stroke-width="1"/>
<rect x="1446.5" y="523.5" width="4" height="63" fill="#ffb74d" stroke="#8d3a2f" stroke-width="1"/>
<rect x="1370" y="0" width="126" height="2" fill="#1e1e1e"/>
<path d="M1370 2 H1376 Q1370 2 1370 8 Z M1496 2 H1490 Q1496 2 1496 8 Z" fill="#1e1e1e"/>
<text x="1377.3" y="16.8" font-size="12" fill="#131722" stroke="#131722" stroke-width="0.25" textLength="14.5" lengthAdjust="spacingAndGlyphs">E...</text>
<text x="1406.4" y="16.8" font-size="12" fill="#131722" stroke="#131722" stroke-width="0.25" textLength="31.0" lengthAdjust="spacingAndGlyphs">Renko</text>
<text x="1441.8" y="16.8" font-size="12" fill="#131722" stroke="#131722" stroke-width="0.25" textLength="25.0" lengthAdjust="spacingAndGlyphs">[AT...</text>
<circle cx="1483.2" cy="12.7" r="6.5" fill="#e9eaee"/><rect x="1479.5" y="11.8" width="7.4" height="1.8" rx="0.9" fill="#9598a1"/>
<rect x="1376.5" y="25.5" width="54" height="25" rx="4" fill="#fff" stroke="#f23645" stroke-width="1"/>
<text x="1403.4" y="35.9" font-size="8.7" fill="#f23645" font-weight="bold" text-anchor="middle" textLength="37.8" lengthAdjust="spacingAndGlyphs">6,976.75</text>
<text x="1403.4" y="45.9" font-size="8.7" fill="#f7525f" stroke="#f7525f" stroke-width="0.25" text-anchor="middle" textLength="16.8" lengthAdjust="spacingAndGlyphs">SELL</text>
<rect x="1376.5" y="54.5" width="54" height="24" rx="4" fill="#fff" stroke="#2962ff" stroke-width="1"/>
<text x="1403.6" y="64.1" font-size="8.7" fill="#2962ff" font-weight="bold" text-anchor="middle" textLength="38.2" lengthAdjust="spacingAndGlyphs">6,977.00</text>
<text x="1403.5" y="73.6" font-size="8.7" fill="#5b8bf7" stroke="#5b8bf7" stroke-width="0.25" text-anchor="middle" textLength="15.0" lengthAdjust="spacingAndGlyphs">BUY</text>
<circle cx="1237.5" cy="766.3" r="7" fill="#fff" stroke="#9c27b0" stroke-width="1.2"/>
<path d="M1239.7 761.5 L1234.5 767.3 H1237.7 L1235.3 771.0999999999999 L1240.5 765.3 H1237.3 Z" fill="#9c27b0"/>
<circle cx="1448.5" cy="766.7" r="7" fill="#fff" stroke="#9c27b0" stroke-width="1.2"/>
<path d="M1450.7 761.9000000000001 L1445.5 767.7 H1448.7 L1446.3 771.5 L1451.5 765.7 H1448.3 Z" fill="#9c27b0"/>
<rect x="4" y="752.5" width="56" height="14.5" fill="#ffffff"/>
<path d="M5.9 754.2 H14.7 V765.1 H10.4 V758.7 H5.9 Z" fill="#131313"/><circle cx="18.7" cy="756.6" r="2.3" fill="#131313"/>
<path d="M23.5 754.2 H27.8 L23.8 765.1 H19.3 Z" fill="#131313"/><path d="M31.5 754.2 H57.5 L53.5 765.1 H27.5 Z" fill="#131313"/>
<text x="34.8" y="762.5" font-size="7.4" fill="#eeeeee" font-weight="bold" textLength="15.7" lengthAdjust="spacingAndGlyphs">PRO</text>
<rect x="0" y="796" width="1496" height="442" fill="#0f0f0f"/>
<text x="7.7" y="815.3" font-size="11.5" fill="#d1d4dc" stroke="#d1d4dc" stroke-width="0.25" textLength="12.0" lengthAdjust="spacingAndGlyphs">1D</text>
<text x="28.4" y="815.3" font-size="11.5" fill="#d1d4dc" stroke="#d1d4dc" stroke-width="0.25" textLength="12.2" lengthAdjust="spacingAndGlyphs">5D</text>
<text x="49.6" y="815.3" font-size="11.5" fill="#d1d4dc" stroke="#d1d4dc" stroke-width="0.25" textLength="13.4" lengthAdjust="spacingAndGlyphs">1M</text>
<text x="71.0" y="815.3" font-size="11.5" fill="#d1d4dc" stroke="#d1d4dc" stroke-width="0.25" textLength="14.0" lengthAdjust="spacingAndGlyphs">3M</text>
<text x="93.0" y="815.3" font-size="11.5" fill="#d1d4dc" stroke="#d1d4dc" stroke-width="0.25" textLength="14.0" lengthAdjust="spacingAndGlyphs">6M</text>
<text x="115.0" y="815.3" font-size="11.5" fill="#d1d4dc" stroke="#d1d4dc" stroke-width="0.25" textLength="19.0" lengthAdjust="spacingAndGlyphs">YTD</text>
<text x="143.0" y="815.3" font-size="11.5" fill="#d1d4dc" stroke="#d1d4dc" stroke-width="0.25" textLength="11.0" lengthAdjust="spacingAndGlyphs">1Y</text>
<text x="163.0" y="815.3" font-size="11.5" fill="#d1d4dc" stroke="#d1d4dc" stroke-width="0.25" textLength="12.4" lengthAdjust="spacingAndGlyphs">5Y</text>
<text x="183.5" y="815.3" font-size="11.5" fill="#d1d4dc" stroke="#d1d4dc" stroke-width="0.25" textLength="12.9" lengthAdjust="spacingAndGlyphs">All</text>
<rect x="204.5" y="803.6" width="1" height="15" fill="#3d3d3d"/>
<path d="M215.5 812 V807 Q215.5 805.5 217 805.5 H227 Q228.5 805.5 228.5 807 V816 Q228.5 817.5 227 817.5 H222" fill="none" stroke="#d1d4dc" stroke-width="1.1"/>
<path d="M215.5 808.5 H228.5 M218.5 804 V806.5 M225.5 804 V806.5 M214 815 H220 M218 813 L220 815 L218 817" fill="none" stroke="#d1d4dc" stroke-width="1.1"/>
<text x="1316.6" y="815.0" font-size="11.5" fill="#d1d4dc" stroke="#d1d4dc" stroke-width="0.25" textLength="73.2" lengthAdjust="spacingAndGlyphs">01:43:05 UTC-5</text>
<text x="1398.5" y="815.0" font-size="11.5" fill="#d1d4dc" stroke="#d1d4dc" stroke-width="0.25" textLength="18.5" lengthAdjust="spacingAndGlyphs">ETH</text>
<rect x="1425.3" y="803" width="1" height="16" fill="#3d3d3d"/>
<rect x="1429.7" y="798.7" width="33.3" height="24.9" rx="4" fill="#2e2e2e"/>
<text x="1446.4" y="815.0" font-size="11.5" fill="#d1d4dc" stroke="#d1d4dc" stroke-width="0.25" text-anchor="middle" textLength="27.5" lengthAdjust="spacingAndGlyphs">B-ADJ</text>
<path d="M1472.5 811 V815.5 H1477 M1479.5 805.5 H1484 V810" fill="none" stroke="#d1d4dc" stroke-width="1.1"/>
<rect x="312.3" y="793.8" width="728.7" height="29" rx="5" fill="#1e1e1e"/>
<rect x="312.3" y="793.8" width="728.7" height="1.2" fill="#111"/>
<circle cx="317.5" cy="804.7" r="0.8" fill="#5d606b"/>
<circle cx="317.5" cy="808.3" r="0.8" fill="#5d606b"/>
<circle cx="317.5" cy="812" r="0.8" fill="#5d606b"/>
<circle cx="322.5" cy="804.7" r="0.8" fill="#5d606b"/>
<circle cx="322.5" cy="808.3" r="0.8" fill="#5d606b"/>
<circle cx="322.5" cy="812" r="0.8" fill="#5d606b"/>
<path d="M336.5 807 L349 800.8 M336.5 812.1 L348.8 806 M336.3 817.6 L349.3 811" fill="none" stroke="#c9cbd1" stroke-width="1.0"/>
<circle cx="335.7" cy="807.4" r="1.5" fill="#1e1e1e" stroke="#c9cbd1" stroke-width="1.0"/>
<circle cx="349.3" cy="800.5" r="1.5" fill="#1e1e1e" stroke="#c9cbd1" stroke-width="1.0"/>
<circle cx="335.7" cy="812.5" r="1.5" fill="#1e1e1e" stroke="#c9cbd1" stroke-width="1.0"/>
<path d="M371.5 816.5 C367 811 365.2 808.5 365.2 806.5 A6.25 6.25 0 0 1 377.7 806.5 C377.7 808.5 376 811 371.5 816.5 Z" fill="none" stroke="#c9cbd1" stroke-width="1.0"/>
<circle cx="371.5" cy="806.2" r="2.3" fill="#1e1e1e" stroke="#c9cbd1" stroke-width="1.0"/>
<path d="M395.4 808.8 H407.8" fill="none" stroke="#c9cbd1" stroke-width="1.3"/>
<circle cx="393.9" cy="808.8" r="1.5" fill="#1e1e1e" stroke="#c9cbd1" stroke-width="1.0"/>
<path d="M419.2 811.9 L424.9 805.7 L430.6 810.8 L438 803.4 M434 803.4 H438 V807.4" fill="none" stroke="#c9cbd1" stroke-width="1.0"/>
<circle cx="424.9" cy="805.7" r="1.5" fill="#1e1e1e" stroke="#c9cbd1" stroke-width="1.0"/>
<circle cx="430.6" cy="810.8" r="1.5" fill="#1e1e1e" stroke="#c9cbd1" stroke-width="1.0"/>
<path d="M451 814.75 L462.7 801.9 Q464.5 808 463 813.6 Q457 816.5 451 814.75" fill="none" stroke="#c9cbd1" stroke-width="1.0"/>
<circle cx="451" cy="814.75" r="1.5" fill="#1e1e1e" stroke="#c9cbd1" stroke-width="1.0"/>
<circle cx="462.7" cy="801.9" r="1.5" fill="#1e1e1e" stroke="#c9cbd1" stroke-width="1.0"/>
<circle cx="463" cy="813.6" r="1.5" fill="#1e1e1e" stroke="#c9cbd1" stroke-width="1.0"/>
<path d="M478.9 801.9 H491.9 V814.75 H478.9 Z" fill="none" stroke="#c9cbd1" stroke-width="1.2"/>
<circle cx="478.9" cy="801.9" r="1.6" fill="#1e1e1e" stroke="#c9cbd1" stroke-width="1.0"/>
<circle cx="491.9" cy="801.9" r="1.6" fill="#1e1e1e" stroke="#c9cbd1" stroke-width="1.0"/>
<circle cx="491.9" cy="814.75" r="1.6" fill="#1e1e1e" stroke="#c9cbd1" stroke-width="1.0"/>
<circle cx="478.9" cy="814.75" r="1.6" fill="#1e1e1e" stroke="#c9cbd1" stroke-width="1.0"/>
<path d="M507.8 802 L517.2 815.4 M519.2 802 L509.8 815.4 M510 802 L519.4 815.4" fill="none" stroke="#c9cbd1" stroke-width="1.0"/>
<path d="M536.5 802.4 H549.7 M536.5 807.4 H547.3 M536.5 814.7 H549.7" fill="none" stroke="#c9cbd1" stroke-width="1.2"/>
<path d="M538.5 809 L548.5 812.7" fill="none" stroke="#c9cbd1" stroke-width="0.8"/>
<circle cx="535" cy="802.4" r="1.5" fill="#1e1e1e" stroke="#c9cbd1" stroke-width="1.0"/>
<circle cx="535" cy="807.4" r="1.5" fill="#1e1e1e" stroke="#c9cbd1" stroke-width="1.0"/>
<circle cx="535" cy="814.7" r="1.5" fill="#1e1e1e" stroke="#c9cbd1" stroke-width="1.0"/>
<circle cx="548.8" cy="807.4" r="1.5" fill="#1e1e1e" stroke="#c9cbd1" stroke-width="1.0"/>
<path d="M567.8 803.5 V817.5 M573.2 801 V815.5 M561.5 810.7 L578.9 804.7" fill="none" stroke="#c9cbd1" stroke-width="1.0"/>
<path d="M566.2 805.4 H569.5 V814 H566.2 Z M571.5 802.7 H574.9 V811.5 H571.5 Z" fill="none" stroke="#c9cbd1" stroke-width="1.1"/>
<path d="M593.9 813.7 L605.3 803" fill="none" stroke="#c9cbd1" stroke-width="1.0"/>
<circle cx="592.9" cy="814.7" r="1.5" fill="#1e1e1e" stroke="#c9cbd1" stroke-width="1.0"/>
<circle cx="606.3" cy="802" r="1.5" fill="#1e1e1e" stroke="#c9cbd1" stroke-width="1.0"/>
<path d="M619.4 800.7 V813.4 M620.3 802 H625 V805.5 H626.7 V809.4 H620.3 M634.4 803.5 V815.4" fill="none" stroke="#c9cbd1" stroke-width="1.0"/>
<circle cx="619.4" cy="813.9" r="1.5" fill="#1e1e1e" stroke="#c9cbd1" stroke-width="1.0"/>
<circle cx="634.4" cy="802" r="1.5" fill="#1e1e1e" stroke="#c9cbd1" stroke-width="1.0"/>
<path d="M650.5 802.4 H663.8 M650.5 810 H661 M650.5 814.7 H663.8" fill="none" stroke="#c9cbd1" stroke-width="1.2"/>
<path d="M652 809 L663 805" fill="none" stroke="#c9cbd1" stroke-width="0.8"/>
<circle cx="649" cy="802.4" r="1.5" fill="#1e1e1e" stroke="#c9cbd1" stroke-width="1.0"/>
<circle cx="649" cy="810" r="1.5" fill="#1e1e1e" stroke="#c9cbd1" stroke-width="1.0"/>
<circle cx="649" cy="814.7" r="1.5" fill="#1e1e1e" stroke="#c9cbd1" stroke-width="1.0"/>
<circle cx="662.4" cy="810" r="1.5" fill="#1e1e1e" stroke="#c9cbd1" stroke-width="1.0"/>
<path d="M676.5 800.7 H692.5 V816 H676.5 Z M676.5 805.8 H692.5 M676.5 810.9 H692.5 M681.8 800.7 V816 M687.2 800.7 V816" fill="none" stroke="#c9cbd1" stroke-width="1.1"/>
<circle cx="692.5" cy="800.7" r="1.5" fill="#1e1e1e" stroke="#c9cbd1" stroke-width="1.0"/>
<circle cx="676.5" cy="816" r="1.5" fill="#1e1e1e" stroke="#c9cbd1" stroke-width="1.0"/>
<path d="M705.1 801.1 H721.6 M705.1 805.7 H719.8 M705.1 810.5 H721.6 M707 814.75 H721.6" fill="none" stroke="#c9cbd1" stroke-width="1.2"/>
<circle cx="721.4" cy="805.7" r="1.5" fill="#1e1e1e" stroke="#c9cbd1" stroke-width="1.0"/>
<circle cx="705.5" cy="814.75" r="1.5" fill="#1e1e1e" stroke="#c9cbd1" stroke-width="1.0"/>
<circle cx="741.5" cy="808.3" r="7.9" fill="#1e1e1e" stroke="#c9cbd1" stroke-width="1.0"/>
<circle cx="741.5" cy="808.3" r="1.3" fill="#c9cbd1"/>
<circle cx="749.4" cy="808.3" r="1.5" fill="#1e1e1e" stroke="#c9cbd1" stroke-width="1.0"/>
<path d="M767 813 C763 809 763.5 800.8 770 800.8 C776.5 800.8 777 809 773 813 V815.9 H767 Z M768 806.5 H772 M770 806.5 V812" fill="none" stroke="#c9cbd1" stroke-width="1.0"/>
<path d="M790.9 801.7 H805.9 V815.1 H790.9 Z M791.5 813 L797.2 810.2 L800 811.3 L805.1 807.4" fill="none" stroke="#c9cbd1" stroke-width="1.1"/>
<circle cx="796" cy="805.7" r="1.6" fill="#1e1e1e" stroke="#c9cbd1" stroke-width="1.0"/>
<path d="M827.8 801 V816.5" fill="none" stroke="#c9cbd1" stroke-width="1.0"/>
<circle cx="827.8" cy="808.5" r="1.7" fill="#1e1e1e" stroke="#c9cbd1" stroke-width="1.0"/>
<circle cx="855.5" cy="806.2" r="7.2" fill="#1e1e1e" stroke="#c9cbd1" stroke-width="1.0"/>
<path d="M855.5 813.6 V818.2" fill="none" stroke="#c9cbd1" stroke-width="1.0"/>
<path d="M855.5 802.2 L856.7 804.9 L859.5 805.1 L857.4 807 L858 809.8 L855.5 808.3 L853 809.8 L853.6 807 L851.5 805.1 L854.3 804.9 Z" fill="none" stroke="#c9cbd1" stroke-width="1.0"/>
<path d="M876.3 814.75 L880.5 808 Q882.5 805.5 885.5 807.5 Q888 810 886 812.5 Q882 815.5 876.3 814.75 Z M887 805 L889.3 807.4 L894.4 802.8" fill="none" stroke="#c9cbd1" stroke-width="1.0"/>
<path d="M912.6 800.5 V805 M912.6 812 V817 M904 808.7 H909.8 M915.5 808.7 H921.7" fill="none" stroke="#2f5bd3" stroke-width="1.4"/>
<path d="M935.9 805 V802.6 H947.8 V805 M941.8 802.6 V815 M939.9 815 H943.9" fill="none" stroke="#c9cbd1" stroke-width="1.2"/>
<path d="M962.3 799.4 H976.3 V810.5 H962.3 Z M965.2 803.5 V802.3 H973.2 V803.5 M969.2 802.3 V808.3 M967.8 808.3 H970.6 M969.1 810.5 V813.8" fill="none" stroke="#c9cbd1" stroke-width="1.1"/>
<circle cx="969.1" cy="815.5" r="1.6" fill="#1e1e1e" stroke="#c9cbd1" stroke-width="1.0"/>
<path d="M990.2 801.7 H1006.7 V815.5 H990.2 Z M990.2 806.2 H1006.7 M990.2 810.5 H1006.7 M995 801.7 V815.5" fill="none" stroke="#c9cbd1" stroke-width="1.1"/>
<path d="M1020 801.1 V817 M1026.8 801.1 V817 M1030.2 801.1 V817 M1034.5 801.1 V817" fill="none" stroke="#c9cbd1" stroke-width="1.1"/>
<path d="M1021 807.5 L1025.8 811.5" fill="none" stroke="#c9cbd1" stroke-width="0.8"/>
<circle cx="1020" cy="806.2" r="1.7" fill="#1e1e1e" stroke="#c9cbd1" stroke-width="1.0"/>
<circle cx="1026.8" cy="812.8" r="1.7" fill="#1e1e1e" stroke="#c9cbd1" stroke-width="1.0"/>
<rect x="0" y="825" width="1496" height="4" fill="#2e2e2e"/>
<rect x="0" y="829" width="1496" height="28" fill="#1e1e1e"/>
<path d="M0 857 V829 H100 Q104 829 104 833 V857 Z" fill="#0f0f0f"/>
<rect x="3" y="833.5" width="18" height="18" rx="4" fill="#f0f0f0"/>
<path d="M7.5 839.5 L10.5 843 L13 841.5 L16 844 M10.5 843 V846.5" fill="none" stroke="#111" stroke-width="1.1"/><circle cx="10" cy="838.5" r="1" fill="#111"/><circle cx="13.5" cy="847.5" r="1" fill="#111"/>
<text x="26.7" y="847.0" font-size="12.5" fill="#d1d4dc" stroke="#d1d4dc" stroke-width="0.25" textLength="71.0" lengthAdjust="spacingAndGlyphs">Strategy Tester</text>
<text x="114.0" y="847.0" font-size="12.5" fill="#d1d4dc" stroke="#d1d4dc" stroke-width="0.25" textLength="62.5" lengthAdjust="spacingAndGlyphs">Trading Panel</text>
<path d="M1450.6 846.5 H1461.5" stroke="#b2b5be" stroke-width="1.2"/>
<path d="M1476 839.5 V837.5 Q1476 836 1477.5 836 H1479 M1486 836 H1487.5 Q1489 836 1489 837.5 V839.5 M1489 845.5 V847.5 Q1489 849 1487.5 849 H1486 M1479 849 H1477.5 Q1476 849 1476 847.5 V845.5" fill="none" stroke="#b2b5be" stroke-width="1.2"/>
<text x="11.8" y="878.8" font-size="11.6" fill="#d1d4dc" font-weight="bold" textLength="69.9" lengthAdjust="spacingAndGlyphs">DivAlgo report</text>
<circle cx="92.1" cy="876" r="6.6" fill="#3b1d48"/>
<rect x="88.2" y="872.5" width="7.8" height="6.8" rx="1" fill="none" stroke="#e040fb" stroke-width="1.3"/><rect x="88.2" y="872.5" width="7.8" height="2.2" fill="#e040fb"/>
<path d="M103 875.5 L106 878 L109 875.5" fill="none" stroke="#b2b5be" stroke-width="1"/>
<rect x="1310" y="870" width="13" height="12" rx="2" fill="none" stroke="#b2b5be" stroke-width="1.1"/><path d="M1310 873.5 H1323 M1313.5 868.5 V871 M1319.5 868.5 V871" stroke="#b2b5be" stroke-width="1.1"/>
<text x="1334.9" y="879.7" font-size="12" fill="#d1d4dc" stroke="#d1d4dc" stroke-width="0.25" textLength="135.3" lengthAdjust="spacingAndGlyphs">Dec 28, 2024 — Dec 28, 2025</text>
<path d="M1478 875.5 L1481 878 L1484 875.5" fill="none" stroke="#b2b5be" stroke-width="1"/>
<rect x="9" y="894" width="75.8" height="21" rx="10.5" fill="#f0f0f0"/>
<text x="18.8" y="907.8" font-size="11.3" fill="#0f0f0f" stroke="#0f0f0f" stroke-width="0.25" textLength="56.8" lengthAdjust="spacingAndGlyphs">Equity chart</text>
<rect x="88.1" y="894" width="77.5" height="21" rx="10.5" fill="#2e2e2e"/>
<text x="97.7" y="907.8" font-size="11.3" fill="#d1d4dc" stroke="#d1d4dc" stroke-width="0.25" textLength="58.7" lengthAdjust="spacingAndGlyphs">Performance</text>
<rect x="169.1" y="894" width="88.6" height="21" rx="10.5" fill="#2e2e2e"/>
<text x="179.0" y="907.8" font-size="11.3" fill="#d1d4dc" stroke="#d1d4dc" stroke-width="0.25" textLength="68.7" lengthAdjust="spacingAndGlyphs">Trades analysis</text>
<rect x="261.3" y="894" width="144.2" height="21" rx="10.5" fill="#2e2e2e"/>
<text x="270.0" y="907.8" font-size="11.3" fill="#d1d4dc" stroke="#d1d4dc" stroke-width="0.25" textLength="126.9" lengthAdjust="spacingAndGlyphs">Risk-adjusted performance</text>
<rect x="409" y="894" width="80.8" height="21" rx="10.5" fill="#2e2e2e"/>
<text x="418.2" y="907.8" font-size="11.3" fill="#d1d4dc" stroke="#d1d4dc" stroke-width="0.25" textLength="62.1" lengthAdjust="spacingAndGlyphs">List of trades</text>
<rect x="9.5" y="924.5" width="287" height="52.5" rx="6" fill="none" stroke="#3d3d3d" stroke-width="1"/>
<text x="22.0" y="946.5" font-size="11.3" fill="#d1d4dc" font-weight="bold" textLength="46.4" lengthAdjust="spacingAndGlyphs">Total P&amp;L</text>
<circle cx="78.7" cy="942.3" r="5.3" fill="#6a6a6a"/><rect x="78.0" y="941" width="1.4" height="4" fill="#0f0f0f"/><circle cx="78.7" cy="939.3" r="0.8" fill="#0f0f0f"/>
<rect x="307.5" y="924.5" width="285" height="52.5" rx="6" fill="none" stroke="#3d3d3d" stroke-width="1"/>
<text x="319.6" y="946.5" font-size="11.3" fill="#d1d4dc" font-weight="bold" textLength="106.4" lengthAdjust="spacingAndGlyphs">Max equity drawdown</text>
<circle cx="436.4" cy="942.3" r="5.3" fill="#6a6a6a"/><rect x="435.7" y="941" width="1.4" height="4" fill="#0f0f0f"/><circle cx="436.4" cy="939.3" r="0.8" fill="#0f0f0f"/>
<rect x="603.5" y="924.5" width="286" height="52.5" rx="6" fill="none" stroke="#3d3d3d" stroke-width="1"/>
<text x="616.1" y="946.5" font-size="11.3" fill="#d1d4dc" font-weight="bold" textLength="57.3" lengthAdjust="spacingAndGlyphs">Total trades</text>
<circle cx="683.4" cy="942.3" r="5.3" fill="#6a6a6a"/><rect x="682.6999999999999" y="941" width="1.4" height="4" fill="#0f0f0f"/><circle cx="683.4" cy="939.3" r="0.8" fill="#0f0f0f"/>
<rect x="901.5" y="924.5" width="284" height="52.5" rx="6" fill="none" stroke="#3d3d3d" stroke-width="1"/>
<text x="913.7" y="946.5" font-size="11.3" fill="#d1d4dc" font-weight="bold" textLength="81.4" lengthAdjust="spacingAndGlyphs">Profitable trades</text>
<circle cx="1005.1" cy="942.3" r="5.3" fill="#6a6a6a"/><rect x="1004.4" y="941" width="1.4" height="4" fill="#0f0f0f"/><circle cx="1005.1" cy="939.3" r="0.8" fill="#0f0f0f"/>
<rect x="1196.5" y="924.5" width="286" height="52.5" rx="6" fill="none" stroke="#3d3d3d" stroke-width="1"/>
<text x="1209.2" y="946.5" font-size="11.3" fill="#d1d4dc" font-weight="bold" textLength="60.4" lengthAdjust="spacingAndGlyphs">Profit factor</text>
<circle cx="1280.5" cy="942.3" r="5.3" fill="#6a6a6a"/><rect x="1279.8" y="941" width="1.4" height="4" fill="#0f0f0f"/><circle cx="1280.5" cy="939.3" r="0.8" fill="#0f0f0f"/>
<text x="22.0" y="964.3" font-size="12.5" fill="#22ab94" stroke="#22ab94" stroke-width="0.25" textLength="58.8" lengthAdjust="spacingAndGlyphs">+15,500.00</text>
<text x="84.0" y="964.3" font-size="8" fill="#22ab94" stroke="#22ab94" stroke-width="0.25" textLength="14.2" lengthAdjust="spacingAndGlyphs">USD</text>
<text x="103.6" y="964.3" font-size="11" fill="#22ab94" stroke="#22ab94" stroke-width="0.25" textLength="37.3" lengthAdjust="spacingAndGlyphs">+15.50%</text>
<text x="319.0" y="964.3" font-size="12.5" fill="#d1d4dc" stroke="#d1d4dc" stroke-width="0.25" textLength="45.7" lengthAdjust="spacingAndGlyphs">1,565.00</text>
<text x="368.0" y="964.3" font-size="8" fill="#d1d4dc" stroke="#d1d4dc" stroke-width="0.25" textLength="14.0" lengthAdjust="spacingAndGlyphs">USD</text>
<text x="387.5" y="964.3" font-size="11" fill="#d1d4dc" stroke="#d1d4dc" stroke-width="0.25" textLength="26.9" lengthAdjust="spacingAndGlyphs">1.47%</text>
<text x="616.0" y="964.3" font-size="12.5" fill="#d1d4dc" stroke="#d1d4dc" stroke-width="0.25" textLength="11.3" lengthAdjust="spacingAndGlyphs">91</text>
<text x="912.9" y="964.3" font-size="12.5" fill="#d1d4dc" stroke="#d1d4dc" stroke-width="0.25" textLength="36.1" lengthAdjust="spacingAndGlyphs">71.43%</text>
<text x="951.0" y="964.3" font-size="8.5" fill="#d1d4dc" stroke="#d1d4dc" stroke-width="0.25" textLength="22.8" lengthAdjust="spacingAndGlyphs">65/91</text>
<text x="1209.5" y="964.3" font-size="12.5" fill="#d1d4dc" stroke="#d1d4dc" stroke-width="0.25" textLength="29.9" lengthAdjust="spacingAndGlyphs">2.598</text>
<text x="9.1" y="1008.6" font-size="11.3" fill="#d1d4dc" font-weight="bold" textLength="59.7" lengthAdjust="spacingAndGlyphs">Equity chart</text>
<rect x="1463.5" y="995.5" width="20" height="20" rx="3.5" fill="none" stroke="#3d3d3d" stroke-width="1"/>
<path d="M1468 1006.5 V1010.5 H1472 M1475 1000.5 H1479 V1004.5" fill="none" stroke="#d1d4dc" stroke-width="1.1"/>
<g>
<path d="M16.0,1211.7 L31.7,1215.7 L47.4,1210.8 L63.0,1206 L78.7,1201.3 L94.4,1199 L110.1,1194.3 L125.8,1192 L141.4,1196.4 L157.1,1189.3 L172.8,1193.8 L188.5,1199 L204.2,1194 L219.8,1198.1 L235.5,1202.7 L251.2,1207 L266.9,1204.6 L282.6,1200 L298.2,1195.2 L313.9,1193 L329.6,1188 L345.3,1192 L361.0,1187.2 L376.6,1182.6 L392.3,1180.3 L408.0,1175.6 L423.7,1171 L439.4,1166 L455.0,1161.3 L470.7,1156.5 L486.4,1151.8 L502.1,1156 L517.8,1151 L533.4,1146 L549.1,1141.3 L564.8,1136.5 L580.5,1131.8 L596.2,1136.5 L611.8,1131.6 L627.5,1127 L643.2,1131.6 L658.9,1127 L674.6,1124.3 L690.2,1119.6 L705.9,1115.1 L721.6,1110.4 L737.3,1105.7 L753.0,1109.9 L768.6,1114.8 L784.3,1119.1 L800.0,1124 L815.7,1119.5 L831.4,1114.4 L847.0,1119.1 L862.7,1114.2 L878.4,1117.9 L894.1,1122.6 L909.8,1115.6 L925.4,1111 L941.1,1115.3 L956.8,1110.8 L972.5,1106 L988.2,1101.3 L1003.8,1106.6 L1019.5,1101.9 L1035.2,1094.8 L1050.9,1090 L1066.6,1085.1 L1082.2,1080.7 L1097.9,1085.1 L1113.6,1077.7 L1129.3,1082.1 L1145.0,1077.6 L1160.6,1072.8 L1176.3,1068 L1192.0,1063.1 L1207.7,1068.4 L1223.4,1063.3 L1239.0,1061 L1254.7,1056.4 L1270.4,1060.3 L1286.1,1055.8 L1301.8,1059.8 L1317.4,1055 L1333.1,1050 L1348.8,1045.5 L1364.5,1043 L1380.2,1038.6 L1395.8,1036 L1411.5,1040.6 L1427.2,1033.2 L1427.2,1216.8 L16.0,1216.8 Z" fill="#121817"/>
<rect x="9.3" y="1184" width="13.4" height="32.8" fill="#076a5a"/>
<rect x="25.0" y="1200.4" width="13.4" height="16.4" fill="#0f4439"/>
<rect x="25.0" y="1216.8" width="13.4" height="21.2" fill="#9a1f2a"/>
<rect x="40.7" y="1184" width="13.4" height="32.8" fill="#076a5a"/>
<rect x="56.3" y="1184.4" width="13.4" height="32.4" fill="#076a5a"/>
<rect x="72.0" y="1184.4" width="13.4" height="32.4" fill="#076a5a"/>
<rect x="87.7" y="1184" width="13.4" height="32.8" fill="#0f4439"/>
<rect x="87.7" y="1200" width="13.4" height="16.8" fill="#076a5a"/>
<rect x="103.4" y="1184" width="13.4" height="32.8" fill="#076a5a"/>
<rect x="119.1" y="1184.8" width="13.4" height="32.0" fill="#0f4439"/>
<rect x="119.1" y="1200.4" width="13.4" height="16.4" fill="#076a5a"/>
<rect x="119.1" y="1216.8" width="13.4" height="16.2" fill="#4c1a1e"/>
<rect x="134.7" y="1199" width="13.4" height="17.8" fill="#0f4439"/>
<rect x="134.7" y="1216.8" width="13.4" height="21.2" fill="#9a1f2a"/>
<rect x="150.4" y="1167.9" width="13.4" height="48.9" fill="#076a5a"/>
<rect x="166.1" y="1216.8" width="13.4" height="21.2" fill="#9a1f2a"/>
<rect x="181.8" y="1216.8" width="13.4" height="21.2" fill="#9a1f2a"/>
<rect x="197.5" y="1184" width="13.4" height="32.8" fill="#076a5a"/>
<rect x="197.5" y="1216.8" width="13.4" height="16.2" fill="#4c1a1e"/>
<rect x="213.1" y="1216.8" width="13.4" height="21.2" fill="#9a1f2a"/>
<rect x="228.8" y="1216.8" width="13.4" height="21.2" fill="#9a1f2a"/>
<rect x="244.5" y="1216.8" width="13.4" height="21.2" fill="#9a1f2a"/>
<rect x="260.2" y="1184" width="13.4" height="32.8" fill="#0f4439"/>
<rect x="260.2" y="1200.3" width="13.4" height="16.5" fill="#076a5a"/>
<rect x="275.9" y="1184" width="13.4" height="32.8" fill="#076a5a"/>
<rect x="291.5" y="1180" width="13.4" height="36.8" fill="#076a5a"/>
<rect x="307.2" y="1179.4" width="13.4" height="37.4" fill="#0f4439"/>
<rect x="307.2" y="1197.8" width="13.4" height="19.0" fill="#076a5a"/>
<rect x="322.9" y="1180.8" width="13.4" height="36.0" fill="#076a5a"/>
<rect x="338.6" y="1199" width="13.4" height="17.8" fill="#0f4439"/>
<rect x="338.6" y="1216.8" width="13.4" height="21.2" fill="#9a1f2a"/>
<rect x="354.3" y="1180" width="13.4" height="36.8" fill="#076a5a"/>
<rect x="369.9" y="1180.8" width="13.4" height="36.0" fill="#076a5a"/>
<rect x="385.6" y="1181.7" width="13.4" height="35.1" fill="#0f4439"/>
<rect x="385.6" y="1198.7" width="13.4" height="18.1" fill="#076a5a"/>
<rect x="401.3" y="1180" width="13.4" height="36.8" fill="#076a5a"/>
<rect x="417.0" y="1179" width="13.4" height="37.8" fill="#076a5a"/>
<rect x="432.7" y="1180" width="13.4" height="36.8" fill="#076a5a"/>
<rect x="448.3" y="1180" width="13.4" height="36.8" fill="#076a5a"/>
<rect x="464.0" y="1180" width="13.4" height="36.8" fill="#076a5a"/>
<rect x="479.7" y="1180" width="13.4" height="36.8" fill="#076a5a"/>
<rect x="495.4" y="1199.6" width="13.4" height="17.2" fill="#0f4439"/>
<rect x="495.4" y="1216.8" width="13.4" height="21.2" fill="#9a1f2a"/>
<rect x="511.1" y="1182.2" width="13.4" height="34.6" fill="#076a5a"/>
<rect x="526.7" y="1182.2" width="13.4" height="34.6" fill="#076a5a"/>
<rect x="542.4" y="1182.2" width="13.4" height="34.6" fill="#076a5a"/>
<rect x="558.1" y="1183" width="13.4" height="33.8" fill="#076a5a"/>
<rect x="558.1" y="1216.8" width="13.4" height="16.2" fill="#4c1a1e"/>
<rect x="573.8" y="1181.3" width="13.4" height="35.5" fill="#076a5a"/>
<rect x="589.5" y="1216.8" width="13.4" height="21.2" fill="#9a1f2a"/>
<rect x="605.1" y="1181.3" width="13.4" height="35.5" fill="#076a5a"/>
<rect x="620.8" y="1183" width="13.4" height="33.8" fill="#076a5a"/>
<rect x="636.5" y="1216.8" width="13.4" height="21.2" fill="#9a1f2a"/>
<rect x="652.2" y="1183" width="13.4" height="33.8" fill="#076a5a"/>
<rect x="667.9" y="1184" width="13.4" height="32.8" fill="#0f4439"/>
<rect x="683.5" y="1183" width="13.4" height="33.8" fill="#076a5a"/>
<rect x="699.2" y="1184.3" width="13.4" height="32.5" fill="#076a5a"/>
<rect x="714.9" y="1184.3" width="13.4" height="32.5" fill="#076a5a"/>
<rect x="730.6" y="1186.5" width="13.4" height="30.3" fill="#076a5a"/>
<rect x="746.3" y="1216.8" width="13.4" height="21.2" fill="#9a1f2a"/>
<rect x="761.9" y="1216.8" width="13.4" height="21.2" fill="#9a1f2a"/>
<rect x="777.6" y="1216.8" width="13.4" height="21.2" fill="#9a1f2a"/>
<rect x="793.3" y="1186" width="13.4" height="30.8" fill="#0f4439"/>
<rect x="793.3" y="1216.8" width="13.4" height="21.2" fill="#9a1f2a"/>
<rect x="809.0" y="1186.5" width="13.4" height="30.3" fill="#076a5a"/>
<rect x="824.7" y="1185.7" width="13.4" height="31.1" fill="#076a5a"/>
<rect x="840.3" y="1216.8" width="13.4" height="21.2" fill="#9a1f2a"/>
<rect x="856.0" y="1186.5" width="13.4" height="30.3" fill="#076a5a"/>
<rect x="856.0" y="1216.8" width="13.4" height="21.2" fill="#4c1a1e"/>
<rect x="871.7" y="1216.8" width="13.4" height="21.2" fill="#9a1f2a"/>
<rect x="887.4" y="1216.8" width="13.4" height="21.2" fill="#9a1f2a"/>
<rect x="903.1" y="1174.7" width="13.4" height="42.1" fill="#076a5a"/>
<rect x="918.7" y="1189" width="13.4" height="27.8" fill="#076a5a"/>
<rect x="934.4" y="1216.8" width="13.4" height="21.2" fill="#9a1f2a"/>
<rect x="950.1" y="1188" width="13.4" height="28.8" fill="#076a5a"/>
<rect x="965.8" y="1188" width="13.4" height="28.8" fill="#076a5a"/>
<rect x="981.5" y="1189" width="13.4" height="27.8" fill="#076a5a"/>
<rect x="997.1" y="1216.8" width="13.4" height="21.2" fill="#9a1f2a"/>
<rect x="1012.8" y="1189" width="13.4" height="27.8" fill="#076a5a"/>
<rect x="1028.5" y="1177" width="13.4" height="39.8" fill="#076a5a"/>
<rect x="1044.2" y="1190.4" width="13.4" height="26.4" fill="#076a5a"/>
<rect x="1044.2" y="1216.8" width="13.4" height="5.2" fill="#4c1a1e"/>
<rect x="1059.9" y="1189.5" width="13.4" height="27.3" fill="#076a5a"/>
<rect x="1075.5" y="1177" width="13.4" height="39.8" fill="#0f4439"/>
<rect x="1075.5" y="1189.5" width="13.4" height="27.3" fill="#076a5a"/>
<rect x="1091.2" y="1216.8" width="13.4" height="21.2" fill="#9a1f2a"/>
<rect x="1106.9" y="1178.4" width="13.4" height="38.4" fill="#076a5a"/>
<rect x="1122.6" y="1201" width="13.4" height="15.8" fill="#0f4439"/>
<rect x="1122.6" y="1216.8" width="13.4" height="21.2" fill="#9a1f2a"/>
<rect x="1138.3" y="1191" width="13.4" height="25.8" fill="#076a5a"/>
<rect x="1153.9" y="1190.2" width="13.4" height="26.6" fill="#076a5a"/>
<rect x="1169.6" y="1190.2" width="13.4" height="26.6" fill="#076a5a"/>
<rect x="1185.3" y="1190.2" width="13.4" height="26.6" fill="#076a5a"/>
<rect x="1201.0" y="1204" width="13.4" height="12.8" fill="#0f4439"/>
<rect x="1201.0" y="1216.8" width="13.4" height="21.2" fill="#9a1f2a"/>
<rect x="1216.7" y="1190.3" width="13.4" height="26.5" fill="#076a5a"/>
<rect x="1232.3" y="1190.3" width="13.4" height="26.5" fill="#0f4439"/>
<rect x="1232.3" y="1203.2" width="13.4" height="13.6" fill="#076a5a"/>
<rect x="1248.0" y="1189.6" width="13.4" height="27.2" fill="#076a5a"/>
<rect x="1263.7" y="1203.2" width="13.4" height="13.6" fill="#0f4439"/>
<rect x="1263.7" y="1216.8" width="13.4" height="21.2" fill="#9a1f2a"/>
<rect x="1279.4" y="1190.3" width="13.4" height="26.5" fill="#076a5a"/>
<rect x="1295.1" y="1203.2" width="13.4" height="13.6" fill="#0f4439"/>
<rect x="1295.1" y="1216.8" width="13.4" height="21.2" fill="#9a1f2a"/>
<rect x="1310.7" y="1190.3" width="13.4" height="26.5" fill="#076a5a"/>
<rect x="1326.4" y="1189" width="13.4" height="27.8" fill="#076a5a"/>
<rect x="1342.1" y="1189" width="13.4" height="27.8" fill="#076a5a"/>
<rect x="1357.8" y="1190" width="13.4" height="26.8" fill="#0f4439"/>
<rect x="1357.8" y="1203.2" width="13.4" height="13.6" fill="#076a5a"/>
<rect x="1373.5" y="1190.3" width="13.4" height="26.5" fill="#076a5a"/>
<rect x="1389.1" y="1191" width="13.4" height="25.8" fill="#0f4439"/>
<rect x="1389.1" y="1203.8" width="13.4" height="13.0" fill="#076a5a"/>
<rect x="1404.8" y="1216.8" width="13.4" height="21.2" fill="#9a1f2a"/>
<rect x="1420.5" y="1176" width="13.4" height="40.8" fill="#076a5a"/>
<polyline points="16.0,1211.7 31.7,1215.7 47.4,1210.8 63.0,1206 78.7,1201.3 94.4,1199 110.1,1194.3 125.8,1192 141.4,1196.4 157.1,1189.3 172.8,1193.8 188.5,1199 204.2,1194 219.8,1198.1 235.5,1202.7 251.2,1207 266.9,1204.6 282.6,1200 298.2,1195.2 313.9,1193 329.6,1188 345.3,1192 361.0,1187.2 376.6,1182.6 392.3,1180.3 408.0,1175.6 423.7,1171 439.4,1166 455.0,1161.3 470.7,1156.5 486.4,1151.8 502.1,1156 517.8,1151 533.4,1146 549.1,1141.3 564.8,1136.5 580.5,1131.8 596.2,1136.5 611.8,1131.6 627.5,1127 643.2,1131.6 658.9,1127 674.6,1124.3 690.2,1119.6 705.9,1115.1 721.6,1110.4 737.3,1105.7 753.0,1109.9 768.6,1114.8 784.3,1119.1 800.0,1124 815.7,1119.5 831.4,1114.4 847.0,1119.1 862.7,1114.2 878.4,1117.9 894.1,1122.6 909.8,1115.6 925.4,1111 941.1,1115.3 956.8,1110.8 972.5,1106 988.2,1101.3 1003.8,1106.6 1019.5,1101.9 1035.2,1094.8 1050.9,1090 1066.6,1085.1 1082.2,1080.7 1097.9,1085.1 1113.6,1077.7 1129.3,1082.1 1145.0,1077.6 1160.6,1072.8 1176.3,1068 1192.0,1063.1 1207.7,1068.4 1223.4,1063.3 1239.0,1061 1254.7,1056.4 1270.4,1060.3 1286.1,1055.8 1301.8,1059.8 1317.4,1055 1333.1,1050 1348.8,1045.5 1364.5,1043 1380.2,1038.6 1395.8,1036 1411.5,1040.6 1427.2,1033.2" fill="none" stroke="#089981" stroke-width="2"/>
<circle cx="16.0" cy="1211.7" r="3" fill="#089981"/>
<circle cx="31.7" cy="1215.7" r="3" fill="#089981"/>
<circle cx="47.4" cy="1210.8" r="3" fill="#089981"/>
<circle cx="63.0" cy="1206" r="3" fill="#089981"/>
<circle cx="78.7" cy="1201.3" r="3" fill="#089981"/>
<circle cx="94.4" cy="1199" r="3" fill="#089981"/>
<circle cx="110.1" cy="1194.3" r="3" fill="#089981"/>
<circle cx="125.8" cy="1192" r="3" fill="#089981"/>
<circle cx="141.4" cy="1196.4" r="3" fill="#089981"/>
<circle cx="157.1" cy="1189.3" r="3" fill="#089981"/>
<circle cx="172.8" cy="1193.8" r="3" fill="#089981"/>
<circle cx="188.5" cy="1199" r="3" fill="#089981"/>
<circle cx="204.2" cy="1194" r="3" fill="#089981"/>
<circle cx="219.8" cy="1198.1" r="3" fill="#089981"/>
<circle cx="235.5" cy="1202.7" r="3" fill="#089981"/>
<circle cx="251.2" cy="1207" r="3" fill="#089981"/>
<circle cx="266.9" cy="1204.6" r="3" fill="#089981"/>
<circle cx="282.6" cy="1200" r="3" fill="#089981"/>
<circle cx="298.2" cy="1195.2" r="3" fill="#089981"/>
<circle cx="313.9" cy="1193" r="3" fill="#089981"/>
<circle cx="329.6" cy="1188" r="3" fill="#089981"/>
<circle cx="345.3" cy="1192" r="3" fill="#089981"/>
<circle cx="361.0" cy="1187.2" r="3" fill="#089981"/>
<circle cx="376.6" cy="1182.6" r="3" fill="#089981"/>
<circle cx="392.3" cy="1180.3" r="3" fill="#089981"/>
<circle cx="408.0" cy="1175.6" r="3" fill="#089981"/>
<circle cx="423.7" cy="1171" r="3" fill="#089981"/>
<circle cx="439.4" cy="1166" r="3" fill="#089981"/>
<circle cx="455.0" cy="1161.3" r="3" fill="#089981"/>
<circle cx="470.7" cy="1156.5" r="3" fill="#089981"/>
<circle cx="486.4" cy="1151.8" r="3" fill="#089981"/>
<circle cx="502.1" cy="1156" r="3" fill="#089981"/>
<circle cx="517.8" cy="1151" r="3" fill="#089981"/>
<circle cx="533.4" cy="1146" r="3" fill="#089981"/>
<circle cx="549.1" cy="1141.3" r="3" fill="#089981"/>
<circle cx="564.8" cy="1136.5" r="3" fill="#089981"/>
<circle cx="580.5" cy="1131.8" r="3" fill="#089981"/>
<circle cx="596.2" cy="1136.5" r="3" fill="#089981"/>
<circle cx="611.8" cy="1131.6" r="3" fill="#089981"/>
<circle cx="627.5" cy="1127" r="3" fill="#089981"/>
<circle cx="643.2" cy="1131.6" r="3" fill="#089981"/>
<circle cx="658.9" cy="1127" r="3" fill="#089981"/>
<circle cx="674.6" cy="1124.3" r="3" fill="#089981"/>
<circle cx="690.2" cy="1119.6" r="3" fill="#089981"/>
<circle cx="705.9" cy="1115.1" r="3" fill="#089981"/>
<circle cx="721.6" cy="1110.4" r="3" fill="#089981"/>
<circle cx="737.3" cy="1105.7" r="3" fill="#089981"/>
<circle cx="753.0" cy="1109.9" r="3" fill="#089981"/>
<circle cx="768.6" cy="1114.8" r="3" fill="#089981"/>
<circle cx="784.3" cy="1119.1" r="3" fill="#089981"/>
<circle cx="800.0" cy="1124" r="3" fill="#089981"/>
<circle cx="815.7" cy="1119.5" r="3" fill="#089981"/>
<circle cx="831.4" cy="1114.4" r="3" fill="#089981"/>
<circle cx="847.0" cy="1119.1" r="3" fill="#089981"/>
<circle cx="862.7" cy="1114.2" r="3" fill="#089981"/>
<circle cx="878.4" cy="1117.9" r="3" fill="#089981"/>
<circle cx="894.1" cy="1122.6" r="3" fill="#089981"/>
<circle cx="909.8" cy="1115.6" r="3" fill="#089981"/>
<circle cx="925.4" cy="1111" r="3" fill="#089981"/>
<circle cx="941.1" cy="1115.3" r="3" fill="#089981"/>
<circle cx="956.8" cy="1110.8" r="3" fill="#089981"/>
<circle cx="972.5" cy="1106" r="3" fill="#089981"/>
<circle cx="988.2" cy="1101.3" r="3" fill="#089981"/>
<circle cx="1003.8" cy="1106.6" r="3" fill="#089981"/>
<circle cx="1019.5" cy="1101.9" r="3" fill="#089981"/>
<circle cx="1035.2" cy="1094.8" r="3" fill="#089981"/>
<circle cx="1050.9" cy="1090" r="3" fill="#089981"/>
<circle cx="1066.6" cy="1085.1" r="3" fill="#089981"/>
<circle cx="1082.2" cy="1080.7" r="3" fill="#089981"/>
<circle cx="1097.9" cy="1085.1" r="3" fill="#089981"/>
<circle cx="1113.6" cy="1077.7" r="3" fill="#089981"/>
<circle cx="1129.3" cy="1082.1" r="3" fill="#089981"/>
<circle cx="1145.0" cy="1077.6" r="3" fill="#089981"/>
<circle cx="1160.6" cy="1072.8" r="3" fill="#089981"/>
<circle cx="1176.3" cy="1068" r="3" fill="#089981"/>
<circle cx="1192.0" cy="1063.1" r="3" fill="#089981"/>
<circle cx="1207.7" cy="1068.4" r="3" fill="#089981"/>
<circle cx="1223.4" cy="1063.3" r="3" fill="#089981"/>
<circle cx="1239.0" cy="1061" r="3" fill="#089981"/>
<circle cx="1254.7" cy="1056.4" r="3" fill="#089981"/>
<circle cx="1270.4" cy="1060.3" r="3" fill="#089981"/>
<circle cx="1286.1" cy="1055.8" r="3" fill="#089981"/>
<circle cx="1301.8" cy="1059.8" r="3" fill="#089981"/>
<circle cx="1317.4" cy="1055" r="3" fill="#089981"/>
<circle cx="1333.1" cy="1050" r="3" fill="#089981"/>
<circle cx="1348.8" cy="1045.5" r="3" fill="#089981"/>
<circle cx="1364.5" cy="1043" r="3" fill="#089981"/>
<circle cx="1380.2" cy="1038.6" r="3" fill="#089981"/>
<circle cx="1395.8" cy="1036" r="3" fill="#089981"/>
<circle cx="1411.5" cy="1040.6" r="3" fill="#089981"/>
<circle cx="1427.2" cy="1033.2" r="3" fill="#089981"/>
</g>
<text x="1443.6" y="1054.0" font-size="10" fill="#d1d4dc" stroke="#d1d4dc" stroke-width="0.25" textLength="39.3" lengthAdjust="spacingAndGlyphs">14,000.00</text>
<text x="1443.6" y="1077.8" font-size="10" fill="#d1d4dc" stroke="#d1d4dc" stroke-width="0.25" textLength="39.3" lengthAdjust="spacingAndGlyphs">12,000.00</text>
<text x="1443.6" y="1101.4" font-size="10" fill="#d1d4dc" stroke="#d1d4dc" stroke-width="0.25" textLength="39.3" lengthAdjust="spacingAndGlyphs">10,000.00</text>
<text x="1443.6" y="1125.2" font-size="10" fill="#d1d4dc" stroke="#d1d4dc" stroke-width="0.25" textLength="35.0" lengthAdjust="spacingAndGlyphs">8,000.00</text>
<text x="1443.6" y="1148.8" font-size="10" fill="#d1d4dc" stroke="#d1d4dc" stroke-width="0.25" textLength="35.0" lengthAdjust="spacingAndGlyphs">6,000.00</text>
<text x="1443.6" y="1172.4" font-size="10" fill="#d1d4dc" stroke="#d1d4dc" stroke-width="0.25" textLength="35.0" lengthAdjust="spacingAndGlyphs">4,000.00</text>
<text x="1443.6" y="1196.0" font-size="10" fill="#d1d4dc" stroke="#d1d4dc" stroke-width="0.25" textLength="35.0" lengthAdjust="spacingAndGlyphs">2,000.00</text>
<text x="1443.8" y="1219.8" font-size="10" fill="#d1d4dc" stroke="#d1d4dc" stroke-width="0.25" textLength="4.4" lengthAdjust="spacingAndGlyphs">0</text>
<rect x="1441.5" y="1026.8" width="50.2" height="13.2" rx="1.5" fill="#089981"/>
<text x="1449.0" y="1037.5" font-size="10" fill="#ffffff" font-weight="bold" textLength="39.2" lengthAdjust="spacingAndGlyphs">15,500.00</text>
<rect x="514.5" y="1191.5" width="464" height="33" rx="5" fill="#1e1e1e" stroke="#ff9800" stroke-width="1.3"/>
<circle cx="530.7" cy="1207.6" r="5.5" fill="#ff9800"/><rect x="530" y="1204" width="1.5" height="4.5" fill="#1e1e1e"/><circle cx="530.7" cy="1210.5" r="0.9" fill="#1e1e1e"/>
<text x="544.3" y="1211.5" font-size="11.5" fill="#ff9800" font-weight="bold" textLength="40.6" lengthAdjust="spacingAndGlyphs">Caution!</text>
<text x="588.5" y="1211.5" font-size="11.5" fill="#e0e3eb" stroke="#e0e3eb" stroke-width="0.25" textLength="302.3" lengthAdjust="spacingAndGlyphs">Backtesting on non-standard charts produces unrealistic results.</text>
<text x="893.6" y="1211.5" font-size="11.5" fill="#3179f5" stroke="#3179f5" stroke-width="0.25" textLength="54.3" lengthAdjust="spacingAndGlyphs">Learn more</text>
<path d="M957.5 1203.5 L965 1211 M965 1203.5 L957.5 1211" stroke="#d1d4dc" stroke-width="1.3"/>
</svg>
</body></html>
